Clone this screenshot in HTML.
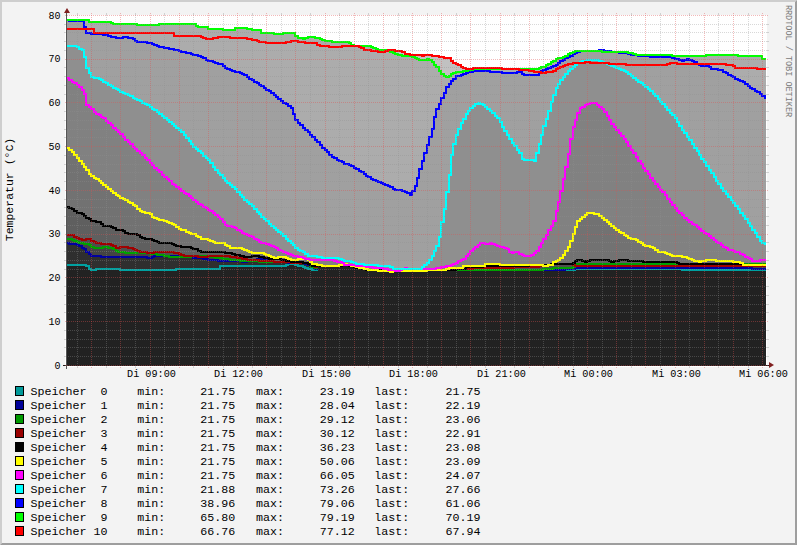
<!DOCTYPE html>
<html><head><meta charset="utf-8"><title>RRD</title>
<style>
html,body{margin:0;padding:0;background:#f3f3f3;}
body{width:797px;height:545px;overflow:hidden;}
svg{display:block;}
text{font-family:"Liberation Mono",monospace;}
</style></head><body>
<svg width="797" height="545" viewBox="0 0 797 545">
<rect x="0" y="0" width="797" height="545" fill="#f3f3f3"/>
<polygon points="0,545 2,543 2,2 795,2 797,0 0,0" fill="#cecece"/>
<polygon points="2,543 795,543 795,2 797,0 797,545 0,545" fill="#9e9e9e"/>
<rect x="65" y="15" width="702" height="352" fill="#ffffff"/>
<defs><clipPath id="pa"><rect x="67" y="15" width="699" height="350"/></clipPath></defs>
<g clip-path="url(#pa)">
<polygon points="67,365 67,29 69,29 69,29 72,29 72,29 74,29 74,29 77,29 77,29 79,29 79,29 82,29 82,29 84,29 84,29 86,29 86,29 89,29 89,29 91,29 91,29 94,29 94,33 96,33 96,33 99,33 99,33 101,33 101,33 103,33 103,33 106,33 106,33 108,33 108,33 111,33 111,33 113,33 113,33 116,33 116,33 118,33 118,33 120,33 120,33 123,33 123,33 125,33 125,33 128,33 128,33 130,33 130,33 133,33 133,33 135,33 135,33 137,33 137,33 140,33 140,33 142,33 142,33 145,33 145,33 147,33 147,33 150,33 150,33 152,33 152,33 154,33 154,33 157,33 157,33 159,33 159,33 162,33 162,33 164,33 164,33 167,33 167,33 169,33 169,33 172,33 172,33 174,33 174,36 176,36 176,36 179,36 179,36 181,36 181,36 184,36 184,36 186,36 186,36 189,36 189,36 191,36 191,36 193,36 193,36 196,36 196,36 198,36 198,36 201,36 201,37 203,37 203,38 206,38 206,39 208,39 208,39 210,39 210,39 213,39 213,38 215,38 215,38 218,38 218,37 220,37 220,37 223,37 223,37 225,37 225,37 227,37 227,37 230,37 230,38 232,38 232,38 235,38 235,38 237,38 237,38 240,38 240,38 242,38 242,38 244,38 244,38 247,38 247,39 249,39 249,39 252,39 252,40 254,40 254,40 257,40 257,41 259,41 259,42 261,42 261,42 264,42 264,42 266,42 266,43 269,43 269,43 271,43 271,43 274,43 274,43 276,43 276,43 278,43 278,43 281,43 281,43 283,43 283,43 286,43 286,42 288,42 288,42 291,42 291,41 293,41 293,41 295,41 295,41 298,41 298,42 300,42 300,42 303,42 303,42 305,42 305,43 308,43 308,43 310,43 310,43 312,43 312,43 315,43 315,43 317,43 317,45 320,45 320,46 322,46 322,46 325,46 325,46 327,46 327,46 329,46 330,47 332,47 332,47 334,47 334,47 337,47 337,47 339,47 339,47 342,47 342,46 344,46 344,46 347,46 347,46 349,46 349,46 351,46 351,46 354,46 354,46 356,46 356,46 359,46 359,47 361,47 361,48 364,48 364,50 366,50 366,50 368,50 368,50 371,50 371,51 373,51 373,51 376,51 376,51 378,51 378,52 381,52 381,52 383,52 383,52 385,52 385,51 388,51 388,50 390,50 390,50 393,50 393,50 395,50 395,51 398,51 398,51 400,51 400,51 402,51 402,52 405,52 405,54 407,54 407,54 410,54 410,55 412,55 412,55 415,55 415,55 417,55 417,55 419,55 419,55 422,55 422,56 424,56 424,55 427,55 427,55 429,55 429,55 432,55 432,56 434,56 434,56 436,56 436,56 439,56 439,57 441,57 441,57 444,57 444,58 446,58 446,58 449,58 449,58 451,58 451,61 453,61 453,63 456,63 456,64 458,64 458,65 461,65 461,67 463,67 463,68 466,68 466,69 468,69 468,69 470,69 470,69 473,69 473,68 475,68 475,68 478,68 478,68 480,68 480,68 483,68 483,68 485,68 485,68 487,68 487,68 490,68 490,68 492,68 492,68 495,68 495,68 497,68 497,68 500,68 500,68 502,68 502,69 504,69 504,69 507,69 507,69 509,69 509,69 512,69 512,69 514,69 514,69 517,69 517,69 519,69 519,70 522,70 522,70 524,70 524,70 526,70 526,70 529,70 529,71 531,71 531,71 534,71 534,72 536,72 536,72 539,72 539,72 541,72 541,73 543,73 543,73 546,73 546,72 548,72 548,72 551,72 551,72 553,72 553,71 556,71 556,69 558,69 558,68 560,68 560,67 563,67 563,66 565,66 565,65 568,65 568,64 570,64 570,64 573,64 573,63 575,63 575,63 577,63 577,63 580,63 580,63 582,63 582,63 585,63 585,62 587,62 587,62 590,62 590,63 592,63 592,63 594,63 594,63 597,63 597,63 599,63 599,63 602,63 602,63 604,63 604,63 607,63 607,63 609,63 609,64 611,64 611,64 614,64 614,64 616,64 616,64 619,64 619,64 621,64 621,64 624,64 624,64 626,64 626,65 628,65 628,65 631,65 631,65 633,65 633,65 636,65 636,65 638,65 638,65 641,65 641,65 643,65 643,65 645,65 645,65 648,65 648,65 650,65 650,65 653,65 653,65 655,65 655,65 658,65 658,65 660,65 660,65 662,65 662,65 665,65 665,65 667,65 667,64 670,64 670,63 672,63 672,63 675,63 675,63 677,63 677,64 679,64 680,64 682,64 682,64 684,64 684,64 687,64 687,64 689,64 689,64 692,64 692,64 694,64 694,64 697,64 697,64 699,64 699,64 701,64 701,64 704,64 704,64 706,64 706,64 709,64 709,64 711,64 711,64 714,64 714,64 716,64 716,64 718,64 718,64 721,64 721,64 723,64 723,64 726,64 726,65 728,65 728,65 731,65 731,65 733,65 733,66 735,66 735,68 738,68 738,68 740,68 740,68 743,68 743,68 745,68 745,68 748,68 748,68 750,68 750,68 752,68 752,68 755,68 755,68 757,68 757,69 760,69 760,69 762,69 762,69 765,69 765,69 766,69 766,365" fill="#c1c1c1"/>
<polygon points="67,365 67,20 69,20 69,20 72,20 72,20 74,20 74,20 77,20 77,20 79,20 79,20 82,20 82,20 84,20 84,20 86,20 86,20 89,20 89,22 91,22 91,22 94,22 94,22 96,22 96,22 99,22 99,22 101,22 101,22 103,22 103,22 106,22 106,22 108,22 108,22 111,22 111,23 113,23 113,24 116,24 116,24 118,24 118,24 120,24 120,24 123,24 123,24 125,24 125,24 128,24 128,24 130,24 130,24 133,24 133,24 135,24 135,24 137,24 137,25 140,25 140,25 142,25 142,25 145,25 145,25 147,25 147,25 150,25 150,25 152,25 152,25 154,25 154,25 157,25 157,25 159,25 159,24 162,24 162,24 164,24 164,24 167,24 167,24 169,24 169,24 172,24 172,24 174,24 174,24 176,24 176,24 179,24 179,24 181,24 181,24 184,24 184,24 186,24 186,24 189,24 189,24 191,24 191,24 193,24 193,24 196,24 196,26 198,26 198,27 201,27 201,27 203,27 203,27 206,27 206,27 208,27 208,29 210,29 210,29 213,29 213,29 215,29 215,29 218,29 218,29 220,29 220,29 223,29 223,30 225,30 225,30 227,30 227,30 230,30 230,30 232,30 232,30 235,30 235,28 237,28 237,28 240,28 240,28 242,28 242,28 244,28 244,28 247,28 247,29 249,29 249,29 252,29 252,30 254,30 254,30 257,30 257,30 259,30 259,30 261,30 261,33 264,33 264,33 266,33 266,33 269,33 269,33 271,33 271,33 274,33 274,34 276,34 276,34 278,34 278,34 281,34 281,34 283,34 283,33 286,33 286,33 288,33 288,33 291,33 291,33 293,33 293,33 295,33 295,36 298,36 298,38 300,38 300,38 303,38 303,39 305,39 305,38 308,38 308,37 310,37 310,37 312,37 312,37 315,37 315,38 317,38 317,38 320,38 320,39 322,39 322,40 325,40 325,41 327,41 327,41 329,41 330,41 332,41 332,42 334,42 334,42 337,42 337,42 339,42 339,42 342,42 342,42 344,42 344,42 347,42 347,42 349,42 349,43 351,43 351,45 354,45 354,46 356,46 356,46 359,46 359,46 361,46 361,46 364,46 364,46 366,46 366,46 368,46 368,46 371,46 371,47 373,47 373,48 376,48 376,49 378,49 378,50 381,50 381,50 383,50 383,50 385,50 385,50 388,50 388,50 390,50 390,52 393,52 393,53 395,53 395,54 398,54 398,55 400,55 400,55 402,55 402,56 405,56 405,56 407,56 407,56 410,56 410,56 412,56 412,57 415,57 415,58 417,58 417,59 419,59 419,60 422,60 422,60 424,60 424,60 427,60 427,59 429,59 429,60 432,60 432,62 434,62 434,65 436,65 436,67 439,67 439,71 441,71 441,74 444,74 444,76 446,76 446,77 449,77 449,76 451,76 451,74 453,74 453,73 456,73 456,72 458,72 458,72 461,72 461,72 463,72 463,71 466,71 466,71 468,71 468,70 470,70 470,70 473,70 473,69 475,69 475,69 478,69 478,69 480,69 480,69 483,69 483,69 485,69 485,69 487,69 487,69 490,69 490,69 492,69 492,69 495,69 495,69 497,69 497,69 500,69 500,69 502,69 502,69 504,69 504,69 507,69 507,69 509,69 509,69 512,69 512,69 514,69 514,69 517,69 517,69 519,69 519,69 522,69 522,69 524,69 524,69 526,69 526,69 529,69 529,69 531,69 531,69 534,69 534,69 536,69 536,69 539,69 539,68 541,68 541,67 543,67 543,67 546,67 546,65 548,65 548,64 551,64 551,62 553,62 553,61 556,61 556,59 558,59 558,58 560,58 560,58 563,58 563,57 565,57 565,56 568,56 568,54 570,54 570,53 573,53 573,52 575,52 575,51 577,51 577,51 580,51 580,51 582,51 582,51 585,51 585,51 587,51 587,51 590,51 590,51 592,51 592,51 594,51 594,51 597,51 597,51 599,51 599,51 602,51 602,52 604,52 604,52 607,52 607,52 609,52 609,52 611,52 611,52 614,52 614,52 616,52 616,52 619,52 619,52 621,52 621,52 624,52 624,52 626,52 626,52 628,52 628,53 631,53 631,53 633,53 633,54 636,54 636,55 638,55 638,55 641,55 641,55 643,55 643,55 645,55 645,55 648,55 648,55 650,55 650,55 653,55 653,55 655,55 655,55 658,55 658,55 660,55 660,55 662,55 662,55 665,55 665,55 667,55 667,55 670,55 670,55 672,55 672,56 675,56 675,56 677,56 677,56 679,56 680,56 682,56 682,56 684,56 684,56 687,56 687,56 689,56 689,56 692,56 692,56 694,56 694,56 697,56 697,56 699,56 699,56 701,56 701,56 704,56 704,56 706,56 706,55 709,55 709,55 711,55 711,55 714,55 714,55 716,55 716,55 718,55 718,55 721,55 721,55 723,55 723,55 726,55 726,55 728,55 728,55 731,55 731,55 733,55 733,55 735,55 735,55 738,55 738,56 740,56 740,56 743,56 743,56 745,56 745,56 748,56 748,56 750,56 750,56 752,56 752,56 755,56 755,56 757,56 757,56 760,56 760,56 762,56 762,59 765,59 765,59 766,59 766,365" fill="#acacac"/>
<polygon points="67,365 67,20 69,20 69,21 72,21 72,21 74,21 74,21 77,21 77,21 79,21 79,21 82,21 82,21 84,21 84,27 86,27 86,33 89,33 89,33 91,33 91,34 94,34 94,34 96,34 96,34 99,34 99,34 101,34 101,34 103,34 103,35 106,35 106,35 108,35 108,36 111,36 111,37 113,37 113,37 116,37 116,38 118,38 118,38 120,38 120,38 123,38 123,37 125,37 125,37 128,37 128,38 130,38 130,38 133,38 133,39 135,39 135,41 137,41 137,42 140,42 140,42 142,42 142,42 145,42 145,42 147,42 147,43 150,43 150,43 152,43 152,44 154,44 154,45 157,45 157,46 159,46 159,47 162,47 162,47 164,47 164,48 167,48 167,48 169,48 169,49 172,49 172,49 174,49 174,50 176,50 176,50 179,50 179,51 181,51 181,52 184,52 184,52 186,52 186,53 189,53 189,53 191,53 191,54 193,54 193,55 196,55 196,55 198,55 198,56 201,56 201,57 203,57 203,58 206,58 206,60 208,60 208,61 210,61 210,61 213,61 213,62 215,62 215,63 218,63 218,64 220,64 220,64 223,64 223,66 225,66 225,68 227,68 227,69 230,69 230,70 232,70 232,71 235,71 235,72 237,72 237,72 240,72 240,73 242,73 242,74 244,74 244,75 247,75 247,77 249,77 249,79 252,79 252,80 254,80 254,82 257,82 257,83 259,83 259,85 261,85 261,86 264,86 264,88 266,88 266,90 269,90 269,91 271,91 271,93 274,93 274,95 276,95 276,97 278,97 278,99 281,99 281,101 283,101 283,103 286,103 286,104 288,104 288,106 291,106 291,108 293,108 293,114 295,114 295,120 298,120 298,123 300,123 300,125 303,125 303,128 305,128 305,130 308,130 308,132 310,132 310,135 312,135 312,137 315,137 315,140 317,140 317,142 320,142 320,145 322,145 322,148 325,148 325,150 327,150 327,152 329,152 330,155 332,155 332,157 334,157 334,158 337,158 337,160 339,160 339,161 342,161 342,162 344,162 344,164 347,164 347,164 349,164 349,165 351,165 351,166 354,166 354,168 356,168 356,169 359,169 359,171 361,171 361,172 364,172 364,174 366,174 366,176 368,176 368,177 371,177 371,179 373,179 373,180 376,180 376,181 378,181 378,182 381,182 381,183 383,183 383,184 385,184 385,185 388,185 388,186 390,186 390,187 393,187 393,189 395,189 395,190 398,190 398,190 400,190 400,190 402,190 402,191 405,191 405,192 407,192 407,193 410,193 410,195 412,195 412,191 415,191 415,186 417,186 417,178 419,178 419,169 422,169 422,161 424,161 424,153 427,153 427,145 429,145 429,137 432,137 432,129 434,129 434,117 436,117 436,109 439,109 439,104 441,104 441,98 444,98 444,93 446,93 446,87 449,87 449,84 451,84 451,81 453,81 453,79 456,79 456,76 458,76 458,76 461,76 461,75 463,75 463,74 466,74 466,73 468,73 468,72 470,72 470,72 473,72 473,71 475,71 475,71 478,71 478,71 480,71 480,71 483,71 483,71 485,71 485,71 487,71 487,71 490,71 490,72 492,72 492,72 495,72 495,72 497,72 497,72 500,72 500,72 502,72 502,73 504,73 504,73 507,73 507,73 509,73 509,73 512,73 512,73 514,73 514,73 517,73 517,72 519,72 519,72 522,72 522,74 524,74 524,75 526,75 526,75 529,75 529,75 531,75 531,75 534,75 534,75 536,75 536,75 539,75 539,73 541,73 541,71 543,71 543,70 546,70 546,69 548,69 548,68 551,68 551,67 553,67 553,66 556,66 556,65 558,65 558,63 560,63 560,61 563,61 563,60 565,60 565,58 568,58 568,57 570,57 570,56 573,56 573,54 575,54 575,53 577,53 577,52 580,52 580,51 582,51 582,51 585,51 585,51 587,51 587,51 590,51 590,51 592,51 592,51 594,51 594,51 597,51 597,51 599,51 599,50 602,50 602,50 604,50 604,51 607,51 607,51 609,51 609,51 611,51 611,52 614,52 614,52 616,52 616,52 619,52 619,53 621,53 621,53 624,53 624,53 626,53 626,53 628,53 628,54 631,54 631,55 633,55 633,55 636,55 636,55 638,55 638,56 641,56 641,56 643,56 643,56 645,56 645,56 648,56 648,56 650,56 650,57 653,57 653,57 655,57 655,57 658,57 658,57 660,57 660,57 662,57 662,57 665,57 665,57 667,57 667,57 670,57 670,57 672,57 672,58 675,58 675,59 677,59 677,59 679,59 680,60 682,60 682,61 684,61 684,60 687,60 687,59 689,59 689,60 692,60 692,61 694,61 694,62 697,62 697,64 699,64 699,65 701,65 701,66 704,66 704,66 706,66 706,66 709,66 709,67 711,67 711,69 714,69 714,69 716,69 716,69 718,69 718,70 721,70 721,70 723,70 723,72 726,72 726,73 728,73 728,75 731,75 731,76 733,76 733,77 735,77 735,79 738,79 738,80 740,80 740,81 743,81 743,82 745,82 745,84 748,84 748,86 750,86 750,88 752,88 752,89 755,89 755,91 757,91 757,92 760,92 760,94 762,94 762,96 765,96 765,98 766,98 766,365" fill="#a0a0a0"/>
<polygon points="67,365 67,46 69,46 69,46 72,46 72,46 74,46 74,46 77,46 77,47 79,47 79,49 82,49 82,50 84,50 84,57 86,57 86,68 89,68 89,73 91,73 91,77 94,77 94,78 96,78 96,78 99,78 99,79 101,79 101,80 103,80 103,82 106,82 106,83 108,83 108,85 111,85 111,86 113,86 113,88 116,88 116,89 118,89 118,90 120,90 120,92 123,92 123,93 125,93 125,94 128,94 128,95 130,95 130,96 133,96 133,98 135,98 135,99 137,99 137,100 140,100 140,101 142,101 142,103 145,103 145,104 147,104 147,105 150,105 150,107 152,107 152,109 154,109 154,110 157,110 157,112 159,112 159,114 162,114 162,116 164,116 164,118 167,118 167,120 169,120 169,122 172,122 172,124 174,124 174,126 176,126 176,128 179,128 179,130 181,130 181,132 184,132 184,135 186,135 186,138 189,138 189,141 191,141 191,144 193,144 193,147 196,147 196,149 198,149 198,151 201,151 201,153 203,153 203,156 206,156 206,158 208,158 208,160 210,160 210,163 213,163 213,167 215,167 215,170 218,170 218,173 220,173 220,175 223,175 223,178 225,178 225,181 227,181 227,183 230,183 230,185 232,185 232,187 235,187 235,189 237,189 237,192 240,192 240,195 242,195 242,197 244,197 244,200 247,200 247,202 249,202 249,204 252,204 252,206 254,206 254,209 257,209 257,212 259,212 259,214 261,214 261,217 264,217 264,219 266,219 266,221 269,221 269,224 271,224 271,226 274,226 274,228 276,228 276,230 278,230 278,232 281,232 281,234 283,234 283,236 286,236 286,239 288,239 288,241 291,241 291,243 293,243 293,245 295,245 295,248 298,248 298,250 300,250 300,251 303,251 303,252 305,252 305,254 308,254 308,256 310,256 310,256 312,256 312,256 315,256 315,256 317,256 317,257 320,257 320,257 322,257 322,258 325,258 325,258 327,258 327,258 329,258 330,258 332,258 332,258 334,258 334,258 337,258 337,258 339,258 339,259 342,259 342,260 344,260 344,261 347,261 347,261 349,261 349,261 351,261 351,262 354,262 354,263 356,263 356,264 359,264 359,264 361,264 361,264 364,264 364,265 366,265 366,265 368,265 368,265 371,265 371,265 373,265 373,265 376,265 376,265 378,265 378,266 381,266 381,266 383,266 383,266 385,266 385,266 388,266 388,266 390,266 390,267 393,267 393,269 395,269 395,269 398,269 398,269 400,269 400,269 402,269 402,269 405,269 405,269 407,269 407,269 410,269 410,269 412,269 412,269 415,269 415,269 417,269 417,269 419,269 419,269 422,269 422,267 424,267 424,265 427,265 427,263 429,263 429,260 432,260 432,256 434,256 434,251 436,251 436,246 439,246 439,237 441,237 441,222 444,222 444,209 446,209 446,192 449,192 449,175 451,175 451,155 453,155 453,144 456,144 456,135 458,135 458,129 461,129 461,123 463,123 463,119 466,119 466,114 468,114 468,111 470,111 470,108 473,108 473,106 475,106 475,104 478,104 478,103 480,103 480,104 483,104 483,105 485,105 485,107 487,107 487,109 490,109 490,111 492,111 492,113 495,113 495,116 497,116 497,118 500,118 500,122 502,122 502,127 504,127 504,131 507,131 507,135 509,135 509,139 512,139 512,143 514,143 514,146 517,146 517,150 519,150 519,153 522,153 522,159 524,159 524,160 526,160 526,160 529,160 529,160 531,160 531,160 534,160 534,161 536,161 536,153 539,153 539,144 541,144 541,135 543,135 543,126 546,126 546,119 548,119 548,111 551,111 551,102 553,102 553,95 556,95 556,88 558,88 558,84 560,84 560,80 563,80 563,77 565,77 565,74 568,74 568,71 570,71 570,69 573,69 573,67 575,67 575,65 577,65 577,63 580,63 580,62 582,62 582,61 585,61 585,61 587,61 587,60 590,60 590,60 592,60 592,60 594,60 594,60 597,60 597,60 599,60 599,61 602,61 602,62 604,62 604,63 607,63 607,64 609,64 609,65 611,65 611,66 614,66 614,67 616,67 616,68 619,68 619,69 621,69 621,70 624,70 624,71 626,71 626,72 628,72 628,74 631,74 631,76 633,76 633,78 636,78 636,80 638,80 638,82 641,82 641,83 643,83 643,85 645,85 645,87 648,87 648,89 650,89 650,91 653,91 653,94 655,94 655,96 658,96 658,99 660,99 660,102 662,102 662,104 665,104 665,107 667,107 667,110 670,110 670,113 672,113 672,115 675,115 675,118 677,118 677,122 679,122 680,126 682,126 682,130 684,130 684,133 687,133 687,137 689,137 689,140 692,140 692,144 694,144 694,148 697,148 697,151 699,151 699,155 701,155 701,159 704,159 704,162 706,162 706,166 709,166 709,170 711,170 711,173 714,173 714,177 716,177 716,181 718,181 718,184 721,184 721,188 723,188 723,191 726,191 726,194 728,194 728,197 731,197 731,200 733,200 733,203 735,203 735,206 738,206 738,209 740,209 740,213 743,213 743,216 745,216 745,219 748,219 748,223 750,223 750,226 752,226 752,230 755,230 755,233 757,233 757,237 760,237 760,241 762,241 762,243 765,243 765,244 766,244 766,365" fill="#8f8f8f"/>
<polygon points="67,365 67,78 69,78 69,80 72,80 72,82 74,82 74,83 77,83 77,85 79,85 79,87 82,87 82,90 84,90 84,94 86,94 86,105 89,105 89,107 91,107 91,109 94,109 94,112 96,112 96,114 99,114 99,115 101,115 101,117 103,117 103,118 106,118 106,121 108,121 108,123 111,123 111,125 113,125 113,128 116,128 116,130 118,130 118,132 120,132 120,134 123,134 123,137 125,137 125,140 128,140 128,142 130,142 130,144 133,144 133,147 135,147 135,149 137,149 137,151 140,151 140,153 142,153 142,155 145,155 145,158 147,158 147,160 150,160 150,163 152,163 152,165 154,165 154,168 157,168 157,170 159,170 159,172 162,172 162,175 164,175 164,177 167,177 167,179 169,179 169,181 172,181 172,184 174,184 174,185 176,185 176,187 179,187 179,189 181,189 181,191 184,191 184,193 186,193 186,194 189,194 189,196 191,196 191,198 193,198 193,200 196,200 196,202 198,202 198,204 201,204 201,205 203,205 203,207 206,207 206,208 208,208 208,210 210,210 210,211 213,211 213,213 215,213 215,215 218,215 218,217 220,217 220,219 223,219 223,222 225,222 225,225 227,225 227,226 230,226 230,226 232,226 232,227 235,227 235,228 237,228 237,230 240,230 240,231 242,231 242,233 244,233 244,234 247,234 247,235 249,235 249,236 252,236 252,237 254,237 254,239 257,239 257,240 259,240 259,242 261,242 261,243 264,243 264,243 266,243 266,244 269,244 269,245 271,245 271,246 274,246 274,247 276,247 276,248 278,248 278,250 281,250 281,251 283,251 283,252 286,252 286,253 288,253 288,254 291,254 291,255 293,255 293,256 295,256 295,256 298,256 298,257 300,257 300,257 303,257 303,258 305,258 305,259 308,259 308,259 310,259 310,260 312,260 312,260 315,260 315,260 317,260 317,260 320,260 320,260 322,260 322,260 325,260 325,260 327,260 327,260 329,260 330,260 332,260 332,260 334,260 334,261 337,261 337,262 339,262 339,262 342,262 342,263 344,263 344,265 347,265 347,265 349,265 349,265 351,265 351,265 354,265 354,265 356,265 356,266 359,266 359,266 361,266 361,266 364,266 364,266 366,266 366,267 368,267 368,267 371,267 371,267 373,267 373,268 376,268 376,268 378,268 378,268 381,268 381,268 383,268 383,269 385,269 385,269 388,269 388,270 390,270 390,270 393,270 393,270 395,270 395,271 398,271 398,271 400,271 400,270 402,270 402,269 405,269 405,268 407,268 407,269 410,269 410,269 412,269 412,269 415,269 415,269 417,269 417,269 419,269 419,269 422,269 422,269 424,269 424,269 427,269 427,269 429,269 429,269 432,269 432,269 434,269 434,269 436,269 436,268 439,268 439,268 441,268 441,267 444,267 444,267 446,267 446,266 449,266 449,266 451,266 451,265 453,265 453,264 456,264 456,263 458,263 458,261 461,261 461,260 463,260 463,259 466,259 466,256 468,256 468,254 470,254 470,251 473,251 473,249 475,249 475,247 478,247 478,245 480,245 480,243 483,243 483,243 485,243 485,244 487,244 487,244 490,244 490,243 492,243 492,244 495,244 495,245 497,245 497,246 500,246 500,247 502,247 502,247 504,247 504,248 507,248 507,249 509,249 509,252 512,252 512,253 514,253 514,252 517,252 517,252 519,252 519,254 522,254 522,255 524,255 524,256 526,256 526,256 529,256 529,256 531,256 531,255 534,255 534,253 536,253 536,251 539,251 539,247 541,247 541,243 543,243 543,239 546,239 546,235 548,235 548,230 551,230 551,226 553,226 553,221 556,221 556,211 558,211 558,202 560,202 560,191 563,191 563,179 565,179 565,167 568,167 568,154 570,154 570,139 573,139 573,127 575,127 575,120 577,120 577,113 580,113 580,108 582,108 582,107 585,107 585,105 587,105 587,104 590,104 590,103 592,103 592,103 594,103 594,103 597,103 597,105 599,105 599,107 602,107 602,109 604,109 604,112 607,112 607,116 609,116 609,120 611,120 611,124 614,124 614,127 616,127 616,130 619,130 619,133 621,133 621,136 624,136 624,139 626,139 626,142 628,142 628,146 631,146 631,150 633,150 633,153 636,153 636,157 638,157 638,161 641,161 641,164 643,164 643,168 645,168 645,171 648,171 648,174 650,174 650,178 653,178 653,181 655,181 655,184 658,184 658,187 660,187 660,190 662,190 662,192 665,192 665,195 667,195 667,199 670,199 670,202 672,202 672,205 675,205 675,208 677,208 677,211 679,211 680,213 682,213 682,215 684,215 684,218 687,218 687,220 689,220 689,222 692,222 692,224 694,224 694,225 697,225 697,227 699,227 699,229 701,229 701,231 704,231 704,233 706,233 706,234 709,234 709,236 711,236 711,238 714,238 714,240 716,240 716,242 718,242 718,243 721,243 721,245 723,245 723,247 726,247 726,248 728,248 728,250 731,250 731,250 733,250 733,251 735,251 735,252 738,252 738,252 740,252 740,254 743,254 743,255 745,255 745,257 748,257 748,258 750,258 750,259 752,259 752,261 755,261 755,261 757,261 757,261 760,261 760,260 762,260 762,260 765,260 765,260 766,260 766,365" fill="#818181"/>
<polygon points="67,365 67,148 69,148 69,150 72,150 72,152 74,152 74,155 77,155 77,158 79,158 79,161 82,161 82,164 84,164 84,167 86,167 86,170 89,170 89,174 91,174 91,176 94,176 94,178 96,178 96,179 99,179 99,181 101,181 101,183 103,183 103,185 106,185 106,187 108,187 108,189 111,189 111,191 113,191 113,193 116,193 116,195 118,195 118,196 120,196 120,198 123,198 123,199 125,199 125,200 128,200 128,202 130,202 130,203 133,203 133,205 135,205 135,206 137,206 137,209 140,209 140,211 142,211 142,212 145,212 145,213 147,213 147,213 150,213 150,214 152,214 152,217 154,217 154,218 157,218 157,219 159,219 159,220 162,220 162,220 164,220 164,221 167,221 167,222 169,222 169,223 172,223 172,224 174,224 174,225 176,225 176,227 179,227 179,229 181,229 181,230 184,230 184,230 186,230 186,232 189,232 189,233 191,233 191,234 193,234 193,234 196,234 196,236 198,236 198,237 201,237 201,239 203,239 203,239 206,239 206,239 208,239 208,240 210,240 210,241 213,241 213,242 215,242 215,243 218,243 218,243 220,243 220,243 223,243 223,243 225,243 225,245 227,245 227,246 230,246 230,248 232,248 232,248 235,248 235,248 237,248 237,248 240,248 240,248 242,248 242,249 244,249 244,250 247,250 247,251 249,251 249,252 252,252 252,253 254,253 254,253 257,253 257,253 259,253 259,253 261,253 261,253 264,253 264,254 266,254 266,255 269,255 269,256 271,256 271,257 274,257 274,258 276,258 276,258 278,258 278,257 281,257 281,257 283,257 283,257 286,257 286,258 288,258 288,259 291,259 291,260 293,260 293,260 295,260 295,260 298,260 298,259 300,259 300,259 303,259 303,259 305,259 305,259 308,259 308,260 310,260 310,262 312,262 312,264 315,264 315,264 317,264 317,265 320,265 320,265 322,265 322,266 325,266 325,266 327,266 327,266 329,266 330,266 332,266 332,266 334,266 334,266 337,266 337,266 339,266 339,265 342,265 342,265 344,265 344,264 347,264 347,265 349,265 349,265 351,265 351,266 354,266 354,266 356,266 356,267 359,267 359,268 361,268 361,268 364,268 364,269 366,269 366,269 368,269 368,270 371,270 371,270 373,270 373,270 376,270 376,270 378,270 378,271 381,271 381,271 383,271 383,271 385,271 385,271 388,271 388,271 390,271 390,272 393,272 393,271 395,271 395,271 398,271 398,271 400,271 400,271 402,271 402,271 405,271 405,271 407,271 407,271 410,271 410,271 412,271 412,271 415,271 415,271 417,271 417,271 419,271 419,271 422,271 422,271 424,271 424,271 427,271 427,270 429,270 429,270 432,270 432,270 434,270 434,270 436,270 436,270 439,270 439,270 441,270 441,270 444,270 444,270 446,270 446,269 449,269 449,268 451,268 451,268 453,268 453,268 456,268 456,268 458,268 458,268 461,268 461,268 463,268 463,266 466,266 466,266 468,266 468,266 470,266 470,266 473,266 473,266 475,266 475,266 478,266 478,266 480,266 480,266 483,266 483,266 485,266 485,264 487,264 487,264 490,264 490,264 492,264 492,264 495,264 495,264 497,264 497,264 500,264 500,265 502,265 502,265 504,265 504,265 507,265 507,265 509,265 509,265 512,265 512,265 514,265 514,265 517,265 517,265 519,265 519,265 522,265 522,265 524,265 524,265 526,265 526,265 529,265 529,265 531,265 531,265 534,265 534,265 536,265 536,265 539,265 539,265 541,265 541,265 543,265 543,266 546,266 546,266 548,266 548,265 551,265 551,265 553,265 553,262 556,262 556,261 558,261 558,260 560,260 560,258 563,258 563,255 565,255 565,251 568,251 568,247 570,247 570,241 573,241 573,234 575,234 575,227 577,227 577,221 580,221 580,219 582,219 582,217 585,217 585,215 587,215 587,213 590,213 590,213 592,213 592,213 594,213 594,214 597,214 597,214 599,214 599,216 602,216 602,218 604,218 604,220 607,220 607,222 609,222 609,224 611,224 611,226 614,226 614,228 616,228 616,230 619,230 619,232 621,232 621,233 624,233 624,235 626,235 626,236 628,236 628,238 631,238 631,239 633,239 633,239 636,239 636,240 638,240 638,242 641,242 641,243 643,243 643,245 645,245 645,246 648,246 648,246 650,246 650,247 653,247 653,248 655,248 655,250 658,250 658,252 660,252 660,252 662,252 662,252 665,252 665,253 667,253 667,254 670,254 670,255 672,255 672,256 675,256 675,256 677,256 677,256 679,256 680,256 682,256 682,257 684,257 684,257 687,257 687,258 689,258 689,259 692,259 692,260 694,260 694,261 697,261 697,261 699,261 699,262 701,262 701,261 704,261 704,261 706,261 706,260 709,260 709,260 711,260 711,260 714,260 714,260 716,260 716,261 718,261 718,261 721,261 721,261 723,261 723,261 726,261 726,261 728,261 728,261 731,261 731,261 733,261 733,262 735,262 735,262 738,262 738,262 740,262 740,263 743,263 743,265 745,265 745,265 748,265 748,265 750,265 750,265 752,265 752,265 755,265 755,265 757,265 757,265 760,265 760,265 762,265 762,265 765,265 765,265 766,265 766,365" fill="#727272"/>
<polygon points="67,365 67,207 69,207 69,208 72,208 72,209 74,209 74,211 77,211 77,213 79,213 79,213 82,213 82,214 84,214 84,216 86,216 86,218 89,218 89,219 91,219 91,221 94,221 94,221 96,221 96,222 99,222 99,222 101,222 101,224 103,224 103,226 106,226 106,226 108,226 108,226 111,226 111,227 113,227 113,228 116,228 116,230 118,230 118,230 120,230 120,230 123,230 123,231 125,231 125,233 128,233 128,234 130,234 130,234 133,234 133,234 135,234 135,234 137,234 137,235 140,235 140,237 142,237 142,238 145,238 145,239 147,239 147,239 150,239 150,239 152,239 152,240 154,240 154,241 157,241 157,242 159,242 159,243 162,243 162,243 164,243 164,243 167,243 167,243 169,243 169,243 172,243 172,244 174,244 174,245 176,245 176,246 179,246 179,246 181,246 181,247 184,247 184,247 186,247 186,247 189,247 189,247 191,247 191,248 193,248 193,249 196,249 196,249 198,249 198,251 201,251 201,252 203,252 203,252 206,252 206,252 208,252 208,252 210,252 210,252 213,252 213,252 215,252 215,252 218,252 218,252 220,252 220,252 223,252 223,252 225,252 225,253 227,253 227,253 230,253 230,253 232,253 232,254 235,254 235,255 237,255 237,255 240,255 240,256 242,256 242,256 244,256 244,257 247,257 247,257 249,257 249,257 252,257 252,256 254,256 254,256 257,256 257,256 259,256 259,257 261,257 261,257 264,257 264,258 266,258 266,258 269,258 269,259 271,259 271,259 274,259 274,259 276,259 276,259 278,259 278,259 281,259 281,260 283,260 283,260 286,260 286,261 288,261 288,261 291,261 291,262 293,262 293,262 295,262 295,262 298,262 298,262 300,262 300,262 303,262 303,263 305,263 305,263 308,263 308,264 310,264 310,265 312,265 312,266 315,266 315,266 317,266 317,265 320,265 320,266 322,266 322,266 325,266 325,266 327,266 327,266 329,266 330,266 332,266 332,266 334,266 334,266 337,266 337,266 339,266 339,266 342,266 342,265 344,265 344,265 347,265 347,265 349,265 349,266 351,266 351,266 354,266 354,267 356,267 356,268 359,268 359,268 361,268 361,269 364,269 364,269 366,269 366,270 368,270 368,270 371,270 371,270 373,270 373,270 376,270 376,270 378,270 378,270 381,270 381,270 383,270 383,270 385,270 385,270 388,270 388,270 390,270 390,270 393,270 393,270 395,270 395,270 398,270 398,270 400,270 400,270 402,270 402,270 405,270 405,270 407,270 407,270 410,270 410,270 412,270 412,270 415,270 415,270 417,270 417,270 419,270 419,270 422,270 422,270 424,270 424,270 427,270 427,270 429,270 429,270 432,270 432,270 434,270 434,270 436,270 436,270 439,270 439,270 441,270 441,270 444,270 444,270 446,270 446,270 449,270 449,270 451,270 451,270 453,270 453,270 456,270 456,269 458,269 458,269 461,269 461,269 463,269 463,269 466,269 466,267 468,267 468,267 470,267 470,267 473,267 473,267 475,267 475,267 478,267 478,267 480,267 480,267 483,267 483,266 485,266 485,266 487,266 487,266 490,266 490,266 492,266 492,266 495,266 495,266 497,266 497,266 500,266 500,266 502,266 502,266 504,266 504,266 507,266 507,266 509,266 509,266 512,266 512,266 514,266 514,266 517,266 517,266 519,266 519,266 522,266 522,266 524,266 524,266 526,266 526,266 529,266 529,265 531,265 531,265 534,265 534,265 536,265 536,265 539,265 539,265 541,265 541,265 543,265 543,265 546,265 546,265 548,265 548,265 551,265 551,264 553,264 553,264 556,264 556,264 558,264 558,264 560,264 560,264 563,264 563,264 565,264 565,264 568,264 568,264 570,264 570,264 573,264 573,263 575,263 575,261 577,261 577,260 580,260 580,260 582,260 582,261 585,261 585,262 587,262 587,261 590,261 590,260 592,260 592,260 594,260 594,260 597,260 597,260 599,260 599,260 602,260 602,260 604,260 604,260 607,260 607,260 609,260 609,261 611,261 611,262 614,262 614,261 616,261 616,261 619,261 619,260 621,260 621,260 624,260 624,260 626,260 626,260 628,260 628,261 631,261 631,261 633,261 633,261 636,261 636,261 638,261 638,261 641,261 641,261 643,261 643,262 645,262 645,262 648,262 648,262 650,262 650,262 653,262 653,262 655,262 655,262 658,262 658,262 660,262 660,262 662,262 662,262 665,262 665,262 667,262 667,262 670,262 670,262 672,262 672,262 675,262 675,262 677,262 677,263 679,263 680,264 682,264 682,264 684,264 684,264 687,264 687,264 689,264 689,264 692,264 692,264 694,264 694,264 697,264 697,264 699,264 699,264 701,264 701,264 704,264 704,264 706,264 706,264 709,264 709,264 711,264 711,264 714,264 714,264 716,264 716,264 718,264 718,264 721,264 721,264 723,264 723,264 726,264 726,264 728,264 728,264 731,264 731,264 733,264 733,264 735,264 735,264 738,264 738,264 740,264 740,264 743,264 743,265 745,265 745,265 748,265 748,265 750,265 750,265 752,265 752,265 755,265 755,265 757,265 757,265 760,265 760,265 762,265 762,265 765,265 765,265 766,265 766,365" fill="#5f5f5f"/>
<polygon points="67,365 67,235 69,235 69,235 72,235 72,235 74,235 74,237 77,237 77,238 79,238 79,239 82,239 82,240 84,240 84,240 86,240 86,239 89,239 89,239 91,239 91,241 94,241 94,242 96,242 96,243 99,243 99,243 101,243 101,244 103,244 103,244 106,244 106,244 108,244 108,244 111,244 111,245 113,245 113,246 116,246 116,248 118,248 118,248 120,248 120,247 123,247 123,247 125,247 125,247 128,247 128,248 130,248 130,248 133,248 133,249 135,249 135,250 137,250 137,251 140,251 140,252 142,252 142,252 145,252 145,252 147,252 147,253 150,253 150,253 152,253 152,253 154,253 154,252 157,252 157,252 159,252 159,252 162,252 162,252 164,252 164,252 167,252 167,252 169,252 169,252 172,252 172,252 174,252 174,253 176,253 176,253 179,253 179,254 181,254 181,255 184,255 184,256 186,256 186,256 189,256 189,256 191,256 191,256 193,256 193,256 196,256 196,256 198,256 198,257 201,257 201,257 203,257 203,257 206,257 206,257 208,257 208,256 210,256 210,256 213,256 213,256 215,256 215,256 218,256 218,256 220,256 220,256 223,256 223,256 225,256 225,256 227,256 227,256 230,256 230,257 232,257 232,257 235,257 235,257 237,257 237,258 240,258 240,258 242,258 242,259 244,259 244,259 247,259 247,260 249,260 249,260 252,260 252,260 254,260 254,260 257,260 257,260 259,260 259,261 261,261 261,261 264,261 264,261 266,261 266,261 269,261 269,261 271,261 271,261 274,261 274,262 276,262 276,262 278,262 278,262 281,262 281,262 283,262 283,262 286,262 286,262 288,262 288,262 291,262 291,263 293,263 293,263 295,263 295,263 298,263 298,263 300,263 300,263 303,263 303,263 305,263 305,263 308,263 308,264 310,264 310,265 312,265 312,266 315,266 315,267 317,267 317,265 320,265 320,266 322,266 322,266 325,266 325,266 327,266 327,266 329,266 330,266 332,266 332,266 334,266 334,266 337,266 337,266 339,266 339,266 342,266 342,265 344,265 344,265 347,265 347,265 349,265 349,266 351,266 351,266 354,266 354,267 356,267 356,268 359,268 359,268 361,268 361,269 364,269 364,269 366,269 366,270 368,270 368,270 371,270 371,270 373,270 373,270 376,270 376,270 378,270 378,270 381,270 381,270 383,270 383,270 385,270 385,270 388,270 388,270 390,270 390,270 393,270 393,270 395,270 395,270 398,270 398,270 400,270 400,270 402,270 402,270 405,270 405,270 407,270 407,270 410,270 410,270 412,270 412,270 415,270 415,270 417,270 417,270 419,270 419,270 422,270 422,270 424,270 424,270 427,270 427,270 429,270 429,270 432,270 432,270 434,270 434,270 436,270 436,270 439,270 439,270 441,270 441,270 444,270 444,270 446,270 446,270 449,270 449,270 451,270 451,270 453,270 453,270 456,270 456,269 458,269 458,269 461,269 461,269 463,269 463,269 466,269 466,269 468,269 468,269 470,269 470,269 473,269 473,268 475,268 475,268 478,268 478,268 480,268 480,268 483,268 483,268 485,268 485,268 487,268 487,268 490,268 490,268 492,268 492,268 495,268 495,268 497,268 497,268 500,268 500,268 502,268 502,268 504,268 504,268 507,268 507,268 509,268 509,268 512,268 512,268 514,268 514,267 517,267 517,267 519,267 519,267 522,267 522,267 524,267 524,267 526,267 526,267 529,267 529,267 531,267 531,267 534,267 534,267 536,267 536,267 539,267 539,266 541,266 541,266 543,266 543,266 546,266 546,265 548,265 548,265 551,265 551,265 553,265 553,264 556,264 556,264 558,264 558,264 560,264 560,264 563,264 563,264 565,264 565,264 568,264 568,264 570,264 570,264 573,264 573,265 575,265 575,266 577,266 577,266 580,266 580,266 582,266 582,266 585,266 585,266 587,266 587,266 590,266 590,266 592,266 592,266 594,266 594,266 597,266 597,266 599,266 599,266 602,266 602,266 604,266 604,266 607,266 607,266 609,266 609,266 611,266 611,266 614,266 614,266 616,266 616,266 619,266 619,266 621,266 621,266 624,266 624,266 626,266 626,266 628,266 628,266 631,266 631,266 633,266 633,266 636,266 636,266 638,266 638,266 641,266 641,266 643,266 643,266 645,266 645,266 648,266 648,266 650,266 650,266 653,266 653,266 655,266 655,266 658,266 658,266 660,266 660,266 662,266 662,266 665,266 665,266 667,266 667,266 670,266 670,266 672,266 672,266 675,266 675,266 677,266 677,266 679,266 680,266 682,266 682,266 684,266 684,266 687,266 687,266 689,266 689,266 692,266 692,266 694,266 694,266 697,266 697,266 699,266 699,266 701,266 701,266 704,266 704,266 706,266 706,266 709,266 709,266 711,266 711,266 714,266 714,266 716,266 716,266 718,266 718,266 721,266 721,266 723,266 723,266 726,266 726,266 728,266 728,266 731,266 731,266 733,266 733,266 735,266 735,266 738,266 738,266 740,266 740,266 743,266 743,266 745,266 745,266 748,266 748,266 750,266 750,266 752,266 752,266 755,266 755,266 757,266 757,266 760,266 760,266 762,266 762,266 765,266 765,266 766,266 766,365" fill="#4e4e4e"/>
<polygon points="67,365 67,239 69,239 69,239 72,239 72,240 74,240 74,241 77,241 77,242 79,242 79,243 82,243 82,243 84,243 84,244 86,244 86,244 89,244 89,245 91,245 91,247 94,247 94,248 96,248 96,248 99,248 99,248 101,248 101,248 103,248 103,247 106,247 106,247 108,247 108,248 111,248 111,248 113,248 113,249 116,249 116,251 118,251 118,252 120,252 120,252 123,252 123,252 125,252 125,253 128,253 128,253 130,253 130,253 133,253 133,253 135,253 135,253 137,253 137,251 140,251 140,253 142,253 142,253 145,253 145,253 147,253 147,253 150,253 150,254 152,254 152,254 154,254 154,254 157,254 157,255 159,255 159,255 162,255 162,255 164,255 164,256 167,256 167,256 169,256 169,257 172,257 172,257 174,257 174,257 176,257 176,257 179,257 179,257 181,257 181,257 184,257 184,257 186,257 186,257 189,257 189,257 191,257 191,256 193,256 193,256 196,256 196,256 198,256 198,256 201,256 201,256 203,256 203,256 206,256 206,257 208,257 208,257 210,257 210,257 213,257 213,257 215,257 215,258 218,258 218,258 220,258 220,258 223,258 223,259 225,259 225,259 227,259 227,259 230,259 230,260 232,260 232,260 235,260 235,260 237,260 237,260 240,260 240,261 242,261 242,261 244,261 244,261 247,261 247,261 249,261 249,261 252,261 252,261 254,261 254,261 257,261 257,261 259,261 259,262 261,262 261,262 264,262 264,262 266,262 266,262 269,262 269,262 271,262 271,262 274,262 274,262 276,262 276,262 278,262 278,262 281,262 281,262 283,262 283,262 286,262 286,262 288,262 288,262 291,262 291,263 293,263 293,263 295,263 295,263 298,263 298,263 300,263 300,263 303,263 303,263 305,263 305,263 308,263 308,264 310,264 310,266 312,266 312,267 315,267 315,268 317,268 317,265 320,265 320,266 322,266 322,266 325,266 325,266 327,266 327,266 329,266 330,266 332,266 332,266 334,266 334,266 337,266 337,266 339,266 339,266 342,266 342,265 344,265 344,265 347,265 347,265 349,265 349,266 351,266 351,266 354,266 354,267 356,267 356,268 359,268 359,268 361,268 361,269 364,269 364,269 366,269 366,270 368,270 368,270 371,270 371,270 373,270 373,270 376,270 376,270 378,270 378,270 381,270 381,270 383,270 383,270 385,270 385,270 388,270 388,270 390,270 390,270 393,270 393,270 395,270 395,270 398,270 398,270 400,270 400,270 402,270 402,270 405,270 405,270 407,270 407,270 410,270 410,270 412,270 412,270 415,270 415,270 417,270 417,270 419,270 419,270 422,270 422,270 424,270 424,270 427,270 427,270 429,270 429,270 432,270 432,270 434,270 434,270 436,270 436,270 439,270 439,270 441,270 441,270 444,270 444,270 446,270 446,270 449,270 449,270 451,270 451,270 453,270 453,270 456,270 456,270 458,270 458,270 461,270 461,270 463,270 463,270 466,270 466,270 468,270 468,270 470,270 470,270 473,270 473,270 475,270 475,270 478,270 478,270 480,270 480,270 483,270 483,270 485,270 485,270 487,270 487,270 490,270 490,270 492,270 492,270 495,270 495,270 497,270 497,270 500,270 500,270 502,270 502,270 504,270 504,270 507,270 507,270 509,270 509,270 512,270 512,270 514,270 514,270 517,270 517,270 519,270 519,270 522,270 522,270 524,270 524,270 526,270 526,270 529,270 529,270 531,270 531,270 534,270 534,270 536,270 536,270 539,270 539,270 541,270 541,270 543,270 543,269 546,269 546,269 548,269 548,269 551,269 551,269 553,269 553,268 556,268 556,268 558,268 558,268 560,268 560,268 563,268 563,268 565,268 565,268 568,268 568,268 570,268 570,268 573,268 573,267 575,267 575,264 577,264 577,264 580,264 580,264 582,264 582,264 585,264 585,264 587,264 587,264 590,264 590,264 592,264 592,264 594,264 594,264 597,264 597,264 599,264 599,264 602,264 602,264 604,264 604,264 607,264 607,264 609,264 609,264 611,264 611,264 614,264 614,264 616,264 616,264 619,264 619,264 621,264 621,264 624,264 624,264 626,264 626,264 628,264 628,264 631,264 631,264 633,264 633,264 636,264 636,264 638,264 638,264 641,264 641,264 643,264 643,264 645,264 645,264 648,264 648,264 650,264 650,264 653,264 653,264 655,264 655,264 658,264 658,264 660,264 660,264 662,264 662,264 665,264 665,264 667,264 667,264 670,264 670,264 672,264 672,264 675,264 675,264 677,264 677,264 679,264 680,264 682,264 682,264 684,264 684,264 687,264 687,264 689,264 689,264 692,264 692,264 694,264 694,264 697,264 697,264 699,264 699,264 701,264 701,264 704,264 704,264 706,264 706,264 709,264 709,264 711,264 711,264 714,264 714,264 716,264 716,264 718,264 718,264 721,264 721,264 723,264 723,264 726,264 726,264 728,264 728,264 731,264 731,264 733,264 733,264 735,264 735,264 738,264 738,264 740,264 740,264 743,264 743,264 745,264 745,264 748,264 748,264 750,264 750,264 752,264 752,264 755,264 755,264 757,264 757,264 760,264 760,264 762,264 762,264 765,264 765,264 766,264 766,365" fill="#444444"/>
<polygon points="67,365 67,243 69,243 69,244 72,244 72,244 74,244 74,244 77,244 77,245 79,245 79,246 82,246 82,248 84,248 84,249 86,249 86,252 89,252 89,254 91,254 91,256 94,256 94,256 96,256 96,256 99,256 99,256 101,256 101,257 103,257 103,257 106,257 106,257 108,257 108,257 111,257 111,257 113,257 113,257 116,257 116,257 118,257 118,257 120,257 120,257 123,257 123,257 125,257 125,257 128,257 128,257 130,257 130,257 133,257 133,257 135,257 135,257 137,257 137,257 140,257 140,257 142,257 142,257 145,257 145,257 147,257 147,258 150,258 150,258 152,258 152,257 154,257 154,256 157,256 157,256 159,256 159,256 162,256 162,256 164,256 164,256 167,256 167,256 169,256 169,256 172,256 172,256 174,256 174,256 176,256 176,256 179,256 179,256 181,256 181,256 184,256 184,256 186,256 186,257 189,257 189,257 191,257 191,257 193,257 193,258 196,258 196,258 198,258 198,258 201,258 201,258 203,258 203,259 206,259 206,259 208,259 208,260 210,260 210,260 213,260 213,260 215,260 215,260 218,260 218,261 220,261 220,261 223,261 223,261 225,261 225,261 227,261 227,261 230,261 230,261 232,261 232,261 235,261 235,261 237,261 237,261 240,261 240,261 242,261 242,262 244,262 244,262 247,262 247,261 249,261 249,261 252,261 252,260 254,260 254,260 257,260 257,259 259,259 259,259 261,259 261,259 264,259 264,259 266,259 266,260 269,260 269,261 271,261 271,262 274,262 274,262 276,262 276,262 278,262 278,262 281,262 281,262 283,262 283,262 286,262 286,262 288,262 288,263 291,263 291,263 293,263 293,263 295,263 295,263 298,263 298,263 300,263 300,263 303,263 303,263 305,263 305,264 308,264 308,265 310,265 310,266 312,266 312,267 315,267 315,269 317,269 317,265 320,265 320,266 322,266 322,266 325,266 325,266 327,266 327,266 329,266 330,266 332,266 332,266 334,266 334,266 337,266 337,266 339,266 339,266 342,266 342,265 344,265 344,265 347,265 347,265 349,265 349,266 351,266 351,266 354,266 354,267 356,267 356,268 359,268 359,268 361,268 361,269 364,269 364,269 366,269 366,270 368,270 368,270 371,270 371,270 373,270 373,270 376,270 376,270 378,270 378,270 381,270 381,270 383,270 383,270 385,270 385,270 388,270 388,270 390,270 390,270 393,270 393,270 395,270 395,270 398,270 398,270 400,270 400,270 402,270 402,270 405,270 405,270 407,270 407,270 410,270 410,270 412,270 412,270 415,270 415,270 417,270 417,270 419,270 419,270 422,270 422,270 424,270 424,270 427,270 427,270 429,270 429,270 432,270 432,270 434,270 434,270 436,270 436,270 439,270 439,270 441,270 441,270 444,270 444,270 446,270 446,270 449,270 449,270 451,270 451,270 453,270 453,270 456,270 456,270 458,270 458,270 461,270 461,270 463,270 463,270 466,270 466,270 468,270 468,270 470,270 470,270 473,270 473,270 475,270 475,270 478,270 478,270 480,270 480,270 483,270 483,270 485,270 485,270 487,270 487,270 490,270 490,270 492,270 492,270 495,270 495,270 497,270 497,270 500,270 500,270 502,270 502,270 504,270 504,270 507,270 507,270 509,270 509,270 512,270 512,270 514,270 514,270 517,270 517,270 519,270 519,270 522,270 522,270 524,270 524,270 526,270 526,270 529,270 529,270 531,270 531,270 534,270 534,270 536,270 536,270 539,270 539,270 541,270 541,270 543,270 543,270 546,270 546,270 548,270 548,270 551,270 551,270 553,270 553,270 556,270 556,270 558,270 558,270 560,270 560,270 563,270 563,270 565,270 565,269 568,269 568,269 570,269 570,269 573,269 573,269 575,269 575,268 577,268 577,268 580,268 580,268 582,268 582,268 585,268 585,268 587,268 587,268 590,268 590,268 592,268 592,268 594,268 594,268 597,268 597,268 599,268 599,268 602,268 602,268 604,268 604,268 607,268 607,268 609,268 609,268 611,268 611,268 614,268 614,268 616,268 616,268 619,268 619,268 621,268 621,268 624,268 624,268 626,268 626,268 628,268 628,268 631,268 631,268 633,268 633,268 636,268 636,268 638,268 638,268 641,268 641,268 643,268 643,268 645,268 645,268 648,268 648,268 650,268 650,268 653,268 653,268 655,268 655,268 658,268 658,268 660,268 660,268 662,268 662,268 665,268 665,268 667,268 667,268 670,268 670,268 672,268 672,268 675,268 675,268 677,268 677,268 679,268 680,268 682,268 682,268 684,268 684,268 687,268 687,268 689,268 689,268 692,268 692,268 694,268 694,268 697,268 697,268 699,268 699,268 701,268 701,268 704,268 704,268 706,268 706,268 709,268 709,268 711,268 711,268 714,268 714,268 716,268 716,268 718,268 718,268 721,268 721,268 723,268 723,268 726,268 726,268 728,268 728,268 731,268 731,268 733,268 733,268 735,268 735,268 738,268 738,268 740,268 740,268 743,268 743,268 745,268 745,268 748,268 748,268 750,268 750,268 752,268 752,269 755,269 755,269 757,269 757,269 760,269 760,269 762,269 762,269 765,269 765,269 766,269 766,365" fill="#2f2f2f"/>
<polygon points="67,365 67,265 69,265 69,265 72,265 72,265 74,265 74,265 77,265 77,265 79,265 79,265 82,265 82,265 84,265 84,265 86,265 86,266 89,266 89,269 91,269 91,270 94,270 94,270 96,270 96,269 99,269 99,269 101,269 101,269 103,269 103,269 106,269 106,269 108,269 108,269 111,269 111,269 113,269 113,269 116,269 116,269 118,269 118,269 120,269 120,270 123,270 123,270 125,270 125,270 128,270 128,270 130,270 130,270 133,270 133,270 135,270 135,270 137,270 137,270 140,270 140,270 142,270 142,270 145,270 145,270 147,270 147,270 150,270 150,270 152,270 152,270 154,270 154,270 157,270 157,270 159,270 159,270 162,270 162,270 164,270 164,270 167,270 167,270 169,270 169,270 172,270 172,270 174,270 174,270 176,270 176,269 179,269 179,269 181,269 181,269 184,269 184,269 186,269 186,269 189,269 189,269 191,269 191,269 193,269 193,269 196,269 196,269 198,269 198,269 201,269 201,269 203,269 203,269 206,269 206,269 208,269 208,269 210,269 210,269 213,269 213,269 215,269 215,269 218,269 218,269 220,269 220,266 223,266 223,266 225,266 225,266 227,266 227,266 230,266 230,266 232,266 232,266 235,266 235,266 237,266 237,266 240,266 240,266 242,266 242,266 244,266 244,266 247,266 247,266 249,266 249,266 252,266 252,266 254,266 254,266 257,266 257,266 259,266 259,266 261,266 261,266 264,266 264,266 266,266 266,266 269,266 269,266 271,266 271,266 274,266 274,266 276,266 276,266 278,266 278,266 281,266 281,266 283,266 283,266 286,266 286,265 288,265 288,264 291,264 291,264 293,264 293,264 295,264 295,265 298,265 298,266 300,266 300,266 303,266 303,267 305,267 305,268 308,268 308,269 310,269 310,269 312,269 312,270 315,270 315,270 317,270 317,265 320,265 320,266 322,266 322,266 325,266 325,266 327,266 327,266 329,266 330,266 332,266 332,266 334,266 334,266 337,266 337,266 339,266 339,266 342,266 342,265 344,265 344,265 347,265 347,265 349,265 349,266 351,266 351,266 354,266 354,267 356,267 356,268 359,268 359,268 361,268 361,269 364,269 364,269 366,269 366,270 368,270 368,270 371,270 371,270 373,270 373,270 376,270 376,270 378,270 378,270 381,270 381,270 383,270 383,270 385,270 385,270 388,270 388,270 390,270 390,270 393,270 393,270 395,270 395,270 398,270 398,270 400,270 400,270 402,270 402,270 405,270 405,270 407,270 407,270 410,270 410,270 412,270 412,270 415,270 415,270 417,270 417,270 419,270 419,270 422,270 422,270 424,270 424,270 427,270 427,270 429,270 429,270 432,270 432,270 434,270 434,270 436,270 436,270 439,270 439,270 441,270 441,270 444,270 444,270 446,270 446,270 449,270 449,270 451,270 451,270 453,270 453,270 456,270 456,270 458,270 458,270 461,270 461,270 463,270 463,270 466,270 466,270 468,270 468,270 470,270 470,270 473,270 473,270 475,270 475,270 478,270 478,270 480,270 480,270 483,270 483,270 485,270 485,270 487,270 487,270 490,270 490,270 492,270 492,270 495,270 495,270 497,270 497,270 500,270 500,270 502,270 502,270 504,270 504,270 507,270 507,270 509,270 509,270 512,270 512,270 514,270 514,270 517,270 517,270 519,270 519,270 522,270 522,270 524,270 524,270 526,270 526,270 529,270 529,270 531,270 531,270 534,270 534,270 536,270 536,270 539,270 539,270 541,270 541,270 543,270 543,270 546,270 546,270 548,270 548,270 551,270 551,270 553,270 553,270 556,270 556,270 558,270 558,270 560,270 560,270 563,270 563,270 565,270 565,270 568,270 568,270 570,270 570,270 573,270 573,270 575,270 575,269 577,269 577,269 580,269 580,269 582,269 582,269 585,269 585,269 587,269 587,269 590,269 590,269 592,269 592,269 594,269 594,269 597,269 597,269 599,269 599,269 602,269 602,269 604,269 604,269 607,269 607,269 609,269 609,269 611,269 611,269 614,269 614,269 616,269 616,269 619,269 619,269 621,269 621,269 624,269 624,269 626,269 626,269 628,269 628,269 631,269 631,269 633,269 633,269 636,269 636,269 638,269 638,269 641,269 641,269 643,269 643,269 645,269 645,269 648,269 648,269 650,269 650,269 653,269 653,269 655,269 655,269 658,269 658,269 660,269 660,269 662,269 662,269 665,269 665,269 667,269 667,269 670,269 670,269 672,269 672,269 675,269 675,269 677,269 677,269 679,269 680,269 682,269 682,270 684,270 684,270 687,270 687,270 689,270 689,270 692,270 692,270 694,270 694,270 697,270 697,270 699,270 699,270 701,270 701,270 704,270 704,270 706,270 706,270 709,270 709,270 711,270 711,270 714,270 714,270 716,270 716,270 718,270 718,270 721,270 721,270 723,270 723,270 726,270 726,270 728,270 728,270 731,270 731,270 733,270 733,270 735,270 735,270 738,270 738,270 740,270 740,270 743,270 743,270 745,270 745,270 748,270 748,270 750,270 750,270 752,270 752,270 755,270 755,270 757,270 757,270 760,270 760,270 762,270 762,270 765,270 765,270 766,270 766,365" fill="#222222"/>
</g>
<path d="M67 265H69H72H74H77H79H82H84H86V266H89V269H91V270H94H96V269H99H101H103H106H108H111H113H116H118H120V270H123H125H128H130H133H135H137H140H142H145H147H150H152H154H157H159H162H164H167H169H172H174H176V269H179H181H184H186H189H191H193H196H198H201H203H206H208H210H213H215H218H220V266H223H225H227H230H232H235H237H240H242H244H247H249H252H254H257H259H261H264H266H269H271H274H276H278H281H283H286V265H288V264H291H293H295V265H298V266H300H303V267H305V268H308V269H310H312V270H315H317V265H320V266H322H325H327H329H332H334H337H339H342V265H344H347H349V266H351H354V267H356V268H359H361V269H364H366V270H368H371H373H376H378H381H383H385H388H390H393H395H398H400H402H405H407H410H412H415H417H419H422H424H427H429H432H434H436H439H441H444H446H449H451H453H456H458H461H463H466H468H470H473H475H478H480H483H485H487H490H492H495H497H500H502H504H507H509H512H514H517H519H522H524H526H529H531H534H536H539H541H543H546H548H551H553H556H558H560H563H565H568H570H573H575V269H577H580H582H585H587H590H592H594H597H599H602H604H607H609H611H614H616H619H621H624H626H628H631H633H636H638H641H643H645H648H650H653H655H658H660H662H665H667H670H672H675H677H679H682V270H684H687H689H692H694H697H699H701H704H706H709H711H714H716H718H721H723H726H728H731H733H735H738H740H743H745H748H750H752H755H757H760H762H765H766" fill="none" stroke="#00a0a0" stroke-width="2" stroke-linejoin="miter" stroke-linecap="butt" shape-rendering="crispEdges"/>
<path d="M67 243H69V244H72H74H77V245H79V246H82V248H84V249H86V252H89V254H91V256H94H96H99H101V257H103H106H108H111H113H116H118H120H123H125H128H130H133H135H137H140H142H145H147V258H150H152V257H154V256H157H159H162H164H167H169H172H174H176H179H181H184H186V257H189H191H193V258H196H198H201H203V259H206H208V260H210H213H215H218V261H220H223H225H227H230H232H235H237H240H242V262H244H247V261H249H252V260H254H257V259H259H261H264H266V260H269V261H271V262H274H276H278H281H283H286H288V263H291H293H295H298H300H303H305V264H308V265H310V266H312V267H315V269H317V265H320V266H322H325H327H329H332H334H337H339H342V265H344H347H349V266H351H354V267H356V268H359H361V269H364H366V270H368H371H373H376H378H381H383H385H388H390H393H395H398H400H402H405H407H410H412H415H417H419H422H424H427H429H432H434H436H439H441H444H446H449H451H453H456H458H461H463H466H468H470H473H475H478H480H483H485H487H490H492H495H497H500H502H504H507H509H512H514H517H519H522H524H526H529H531H534H536H539H541H543H546H548H551H553H556H558H560H563H565V269H568H570H573H575V268H577H580H582H585H587H590H592H594H597H599H602H604H607H609H611H614H616H619H621H624H626H628H631H633H636H638H641H643H645H648H650H653H655H658H660H662H665H667H670H672H675H677H679H682H684H687H689H692H694H697H699H701H704H706H709H711H714H716H718H721H723H726H728H731H733H735H738H740H743H745H748H750H752V269H755H757H760H762H765H766" fill="none" stroke="#0000a0" stroke-width="2" stroke-linejoin="miter" stroke-linecap="butt" shape-rendering="crispEdges"/>
<path d="M67 239H69H72V240H74V241H77V242H79V243H82H84V244H86H89V245H91V247H94V248H96H99H101H103V247H106H108V248H111H113V249H116V251H118V252H120H123H125V253H128H130H133H135H137V251H140V253H142H145H147H150V254H152H154H157V255H159H162H164V256H167H169V257H172H174H176H179H181H184H186H189H191V256H193H196H198H201H203H206V257H208H210H213H215V258H218H220H223V259H225H227H230V260H232H235H237H240V261H242H244H247H249H252H254H257H259V262H261H264H266H269H271H274H276H278H281H283H286H288H291V263H293H295H298H300H303H305H308V264H310V266H312V267H315V268H317V265H320V266H322H325H327H329H332H334H337H339H342V265H344H347H349V266H351H354V267H356V268H359H361V269H364H366V270H368H371H373H376H378H381H383H385H388H390H393H395H398H400H402H405H407H410H412H415H417H419H422H424H427H429H432H434H436H439H441H444H446H449H451H453H456H458H461H463H466H468H470H473H475H478H480H483H485H487H490H492H495H497H500H502H504H507H509H512H514H517H519H522H524H526H529H531H534H536H539H541H543V269H546H548H551H553V268H556H558H560H563H565H568H570H573V267H575V264H577H580H582H585H587H590H592H594H597H599H602H604H607H609H611H614H616H619H621H624H626H628H631H633H636H638H641H643H645H648H650H653H655H658H660H662H665H667H670H672H675H677H679H682H684H687H689H692H694H697H699H701H704H706H709H711H714H716H718H721H723H726H728H731H733H735H738H740H743H745H748H750H752H755H757H760H762H765H766" fill="none" stroke="#00a000" stroke-width="2" stroke-linejoin="miter" stroke-linecap="butt" shape-rendering="crispEdges"/>
<path d="M67 235H69H72H74V237H77V238H79V239H82V240H84H86V239H89H91V241H94V242H96V243H99H101V244H103H106H108H111V245H113V246H116V248H118H120V247H123H125H128V248H130H133V249H135V250H137V251H140V252H142H145H147V253H150H152H154V252H157H159H162H164H167H169H172H174V253H176H179V254H181V255H184V256H186H189H191H193H196H198V257H201H203H206H208V256H210H213H215H218H220H223H225H227H230V257H232H235H237V258H240H242V259H244H247V260H249H252H254H257H259V261H261H264H266H269H271H274V262H276H278H281H283H286H288H291V263H293H295H298H300H303H305H308V264H310V265H312V266H315V267H317V265H320V266H322H325H327H329H332H334H337H339H342V265H344H347H349V266H351H354V267H356V268H359H361V269H364H366V270H368H371H373H376H378H381H383H385H388H390H393H395H398H400H402H405H407H410H412H415H417H419H422H424H427H429H432H434H436H439H441H444H446H449H451H453H456V269H458H461H463H466H468H470H473V268H475H478H480H483H485H487H490H492H495H497H500H502H504H507H509H512H514V267H517H519H522H524H526H529H531H534H536H539V266H541H543H546V265H548H551H553V264H556H558H560H563H565H568H570H573V265H575V266H577H580H582H585H587H590H592H594H597H599H602H604H607H609H611H614H616H619H621H624H626H628H631H633H636H638H641H643H645H648H650H653H655H658H660H662H665H667H670H672H675H677H679H682H684H687H689H692H694H697H699H701H704H706H709H711H714H716H718H721H723H726H728H731H733H735H738H740H743H745H748H750H752H755H757H760H762H765H766" fill="none" stroke="#a00000" stroke-width="2" stroke-linejoin="miter" stroke-linecap="butt" shape-rendering="crispEdges"/>
<path d="M67 207H69V208H72V209H74V211H77V213H79H82V214H84V216H86V218H89V219H91V221H94H96V222H99H101V224H103V226H106H108H111V227H113V228H116V230H118H120H123V231H125V233H128V234H130H133H135H137V235H140V237H142V238H145V239H147H150H152V240H154V241H157V242H159V243H162H164H167H169H172V244H174V245H176V246H179H181V247H184H186H189H191V248H193V249H196H198V251H201V252H203H206H208H210H213H215H218H220H223H225V253H227H230H232V254H235V255H237H240V256H242H244V257H247H249H252V256H254H257H259V257H261H264V258H266H269V259H271H274H276H278H281V260H283H286V261H288H291V262H293H295H298H300H303V263H305H308V264H310V265H312V266H315H317V265H320V266H322H325H327H329H332H334H337H339H342V265H344H347H349V266H351H354V267H356V268H359H361V269H364H366V270H368H371H373H376H378H381H383H385H388H390H393H395H398H400H402H405H407H410H412H415H417H419H422H424H427H429H432H434H436H439H441H444H446H449H451H453H456V269H458H461H463H466V267H468H470H473H475H478H480H483V266H485H487H490H492H495H497H500H502H504H507H509H512H514H517H519H522H524H526H529V265H531H534H536H539H541H543H546H548H551V264H553H556H558H560H563H565H568H570H573V263H575V261H577V260H580H582V261H585V262H587V261H590V260H592H594H597H599H602H604H607H609V261H611V262H614V261H616H619V260H621H624H626H628V261H631H633H636H638H641H643V262H645H648H650H653H655H658H660H662H665H667H670H672H675H677V263H679V264H682H684H687H689H692H694H697H699H701H704H706H709H711H714H716H718H721H723H726H728H731H733H735H738H740H743V265H745H748H750H752H755H757H760H762H765H766" fill="none" stroke="#000000" stroke-width="2" stroke-linejoin="miter" stroke-linecap="butt" shape-rendering="crispEdges"/>
<path d="M67 148H69V150H72V152H74V155H77V158H79V161H82V164H84V167H86V170H89V174H91V176H94V178H96V179H99V181H101V183H103V185H106V187H108V189H111V191H113V193H116V195H118V196H120V198H123V199H125V200H128V202H130V203H133V205H135V206H137V209H140V211H142V212H145V213H147H150V214H152V217H154V218H157V219H159V220H162H164V221H167V222H169V223H172V224H174V225H176V227H179V229H181V230H184H186V232H189V233H191V234H193H196V236H198V237H201V239H203H206H208V240H210V241H213V242H215V243H218H220H223H225V245H227V246H230V248H232H235H237H240H242V249H244V250H247V251H249V252H252V253H254H257H259H261H264V254H266V255H269V256H271V257H274V258H276H278V257H281H283H286V258H288V259H291V260H293H295H298V259H300H303H305H308V260H310V262H312V264H315H317V265H320H322V266H325H327H329H332H334H337H339V265H342H344V264H347V265H349H351V266H354H356V267H359V268H361H364V269H366H368V270H371H373H376H378V271H381H383H385H388H390V272H393V271H395H398H400H402H405H407H410H412H415H417H419H422H424H427V270H429H432H434H436H439H441H444H446V269H449V268H451H453H456H458H461H463V266H466H468H470H473H475H478H480H483H485V264H487H490H492H495H497H500V265H502H504H507H509H512H514H517H519H522H524H526H529H531H534H536H539H541H543V266H546H548V265H551H553V262H556V261H558V260H560V258H563V255H565V251H568V247H570V241H573V234H575V227H577V221H580V219H582V217H585V215H587V213H590H592H594V214H597H599V216H602V218H604V220H607V222H609V224H611V226H614V228H616V230H619V232H621V233H624V235H626V236H628V238H631V239H633H636V240H638V242H641V243H643V245H645V246H648H650V247H653V248H655V250H658V252H660H662H665V253H667V254H670V255H672V256H675H677H679H682V257H684H687V258H689V259H692V260H694V261H697H699V262H701V261H704H706V260H709H711H714H716V261H718H721H723H726H728H731H733V262H735H738H740V263H743V265H745H748H750H752H755H757H760H762H765H766" fill="none" stroke="#ffff00" stroke-width="2" stroke-linejoin="miter" stroke-linecap="butt" shape-rendering="crispEdges"/>
<path d="M67 78H69V80H72V82H74V83H77V85H79V87H82V90H84V94H86V105H89V107H91V109H94V112H96V114H99V115H101V117H103V118H106V121H108V123H111V125H113V128H116V130H118V132H120V134H123V137H125V140H128V142H130V144H133V147H135V149H137V151H140V153H142V155H145V158H147V160H150V163H152V165H154V168H157V170H159V172H162V175H164V177H167V179H169V181H172V184H174V185H176V187H179V189H181V191H184V193H186V194H189V196H191V198H193V200H196V202H198V204H201V205H203V207H206V208H208V210H210V211H213V213H215V215H218V217H220V219H223V222H225V225H227V226H230H232V227H235V228H237V230H240V231H242V233H244V234H247V235H249V236H252V237H254V239H257V240H259V242H261V243H264H266V244H269V245H271V246H274V247H276V248H278V250H281V251H283V252H286V253H288V254H291V255H293V256H295H298V257H300H303V258H305V259H308H310V260H312H315H317H320H322H325H327H329H332H334V261H337V262H339H342V263H344V265H347H349H351H354H356V266H359H361H364H366V267H368H371H373V268H376H378H381H383V269H385H388V270H390H393H395V271H398H400V270H402V269H405V268H407V269H410H412H415H417H419H422H424H427H429H432H434H436V268H439H441V267H444H446V266H449H451V265H453V264H456V263H458V261H461V260H463V259H466V256H468V254H470V251H473V249H475V247H478V245H480V243H483H485V244H487H490V243H492V244H495V245H497V246H500V247H502H504V248H507V249H509V252H512V253H514V252H517H519V254H522V255H524V256H526H529H531V255H534V253H536V251H539V247H541V243H543V239H546V235H548V230H551V226H553V221H556V211H558V202H560V191H563V179H565V167H568V154H570V139H573V127H575V120H577V113H580V108H582V107H585V105H587V104H590V103H592H594H597V105H599V107H602V109H604V112H607V116H609V120H611V124H614V127H616V130H619V133H621V136H624V139H626V142H628V146H631V150H633V153H636V157H638V161H641V164H643V168H645V171H648V174H650V178H653V181H655V184H658V187H660V190H662V192H665V195H667V199H670V202H672V205H675V208H677V211H679V213H682V215H684V218H687V220H689V222H692V224H694V225H697V227H699V229H701V231H704V233H706V234H709V236H711V238H714V240H716V242H718V243H721V245H723V247H726V248H728V250H731H733V251H735V252H738H740V254H743V255H745V257H748V258H750V259H752V261H755H757H760V260H762H765H766" fill="none" stroke="#ff00ff" stroke-width="2" stroke-linejoin="miter" stroke-linecap="butt" shape-rendering="crispEdges"/>
<path d="M67 46H69H72H74H77V47H79V49H82V50H84V57H86V68H89V73H91V77H94V78H96H99V79H101V80H103V82H106V83H108V85H111V86H113V88H116V89H118V90H120V92H123V93H125V94H128V95H130V96H133V98H135V99H137V100H140V101H142V103H145V104H147V105H150V107H152V109H154V110H157V112H159V114H162V116H164V118H167V120H169V122H172V124H174V126H176V128H179V130H181V132H184V135H186V138H189V141H191V144H193V147H196V149H198V151H201V153H203V156H206V158H208V160H210V163H213V167H215V170H218V173H220V175H223V178H225V181H227V183H230V185H232V187H235V189H237V192H240V195H242V197H244V200H247V202H249V204H252V206H254V209H257V212H259V214H261V217H264V219H266V221H269V224H271V226H274V228H276V230H278V232H281V234H283V236H286V239H288V241H291V243H293V245H295V248H298V250H300V251H303V252H305V254H308V256H310H312H315H317V257H320H322V258H325H327H329H332H334H337H339V259H342V260H344V261H347H349H351V262H354V263H356V264H359H361H364V265H366H368H371H373H376H378V266H381H383H385H388H390V267H393V269H395H398H400H402H405H407H410H412H415H417H419H422V267H424V265H427V263H429V260H432V256H434V251H436V246H439V237H441V222H444V209H446V192H449V175H451V155H453V144H456V135H458V129H461V123H463V119H466V114H468V111H470V108H473V106H475V104H478V103H480V104H483V105H485V107H487V109H490V111H492V113H495V116H497V118H500V122H502V127H504V131H507V135H509V139H512V143H514V146H517V150H519V153H522V159H524V160H526H529H531H534V161H536V153H539V144H541V135H543V126H546V119H548V111H551V102H553V95H556V88H558V84H560V80H563V77H565V74H568V71H570V69H573V67H575V65H577V63H580V62H582V61H585H587V60H590H592H594H597H599V61H602V62H604V63H607V64H609V65H611V66H614V67H616V68H619V69H621V70H624V71H626V72H628V74H631V76H633V78H636V80H638V82H641V83H643V85H645V87H648V89H650V91H653V94H655V96H658V99H660V102H662V104H665V107H667V110H670V113H672V115H675V118H677V122H679V126H682V130H684V133H687V137H689V140H692V144H694V148H697V151H699V155H701V159H704V162H706V166H709V170H711V173H714V177H716V181H718V184H721V188H723V191H726V194H728V197H731V200H733V203H735V206H738V209H740V213H743V216H745V219H748V223H750V226H752V230H755V233H757V237H760V241H762V243H765V244H766" fill="none" stroke="#00ffff" stroke-width="2" stroke-linejoin="miter" stroke-linecap="butt" shape-rendering="crispEdges"/>
<path d="M67 20H69V21H72H74H77H79H82H84V27H86V33H89H91V34H94H96H99H101H103V35H106H108V36H111V37H113H116V38H118H120H123V37H125H128V38H130H133V39H135V41H137V42H140H142H145H147V43H150H152V44H154V45H157V46H159V47H162H164V48H167H169V49H172H174V50H176H179V51H181V52H184H186V53H189H191V54H193V55H196H198V56H201V57H203V58H206V60H208V61H210H213V62H215V63H218V64H220H223V66H225V68H227V69H230V70H232V71H235V72H237H240V73H242V74H244V75H247V77H249V79H252V80H254V82H257V83H259V85H261V86H264V88H266V90H269V91H271V93H274V95H276V97H278V99H281V101H283V103H286V104H288V106H291V108H293V114H295V120H298V123H300V125H303V128H305V130H308V132H310V135H312V137H315V140H317V142H320V145H322V148H325V150H327V152H329V155H332V157H334V158H337V160H339V161H342V162H344V164H347H349V165H351V166H354V168H356V169H359V171H361V172H364V174H366V176H368V177H371V179H373V180H376V181H378V182H381V183H383V184H385V185H388V186H390V187H393V189H395V190H398H400H402V191H405V192H407V193H410V195H412V191H415V186H417V178H419V169H422V161H424V153H427V145H429V137H432V129H434V117H436V109H439V104H441V98H444V93H446V87H449V84H451V81H453V79H456V76H458H461V75H463V74H466V73H468V72H470H473V71H475H478H480H483H485H487H490V72H492H495H497H500H502V73H504H507H509H512H514H517V72H519H522V74H524V75H526H529H531H534H536H539V73H541V71H543V70H546V69H548V68H551V67H553V66H556V65H558V63H560V61H563V60H565V58H568V57H570V56H573V54H575V53H577V52H580V51H582H585H587H590H592H594H597H599V50H602H604V51H607H609H611V52H614H616H619V53H621H624H626H628V54H631V55H633H636H638V56H641H643H645H648H650V57H653H655H658H660H662H665H667H670H672V58H675V59H677H679V60H682V61H684V60H687V59H689V60H692V61H694V62H697V64H699V65H701V66H704H706H709V67H711V69H714H716H718V70H721H723V72H726V73H728V75H731V76H733V77H735V79H738V80H740V81H743V82H745V84H748V86H750V88H752V89H755V91H757V92H760V94H762V96H765V98H766" fill="none" stroke="#0000ff" stroke-width="2" stroke-linejoin="miter" stroke-linecap="butt" shape-rendering="crispEdges"/>
<path d="M67 20H69H72H74H77H79H82H84H86H89V22H91H94H96H99H101H103H106H108H111V23H113V24H116H118H120H123H125H128H130H133H135H137V25H140H142H145H147H150H152H154H157H159V24H162H164H167H169H172H174H176H179H181H184H186H189H191H193H196V26H198V27H201H203H206H208V29H210H213H215H218H220H223V30H225H227H230H232H235V28H237H240H242H244H247V29H249H252V30H254H257H259H261V33H264H266H269H271H274V34H276H278H281H283V33H286H288H291H293H295V36H298V38H300H303V39H305V38H308V37H310H312H315V38H317H320V39H322V40H325V41H327H329H332V42H334H337H339H342H344H347H349V43H351V45H354V46H356H359H361H364H366H368H371V47H373V48H376V49H378V50H381H383H385H388H390V52H393V53H395V54H398V55H400H402V56H405H407H410H412V57H415V58H417V59H419V60H422H424H427V59H429V60H432V62H434V65H436V67H439V71H441V74H444V76H446V77H449V76H451V74H453V73H456V72H458H461H463V71H466H468V70H470H473V69H475H478H480H483H485H487H490H492H495H497H500H502H504H507H509H512H514H517H519H522H524H526H529H531H534H536H539V68H541V67H543H546V65H548V64H551V62H553V61H556V59H558V58H560H563V57H565V56H568V54H570V53H573V52H575V51H577H580H582H585H587H590H592H594H597H599H602V52H604H607H609H611H614H616H619H621H624H626H628V53H631H633V54H636V55H638H641H643H645H648H650H653H655H658H660H662H665H667H670H672V56H675H677H679H682H684H687H689H692H694H697H699H701H704H706V55H709H711H714H716H718H721H723H726H728H731H733H735H738V56H740H743H745H748H750H752H755H757H760H762V59H765H766" fill="none" stroke="#00ff00" stroke-width="2" stroke-linejoin="miter" stroke-linecap="butt" shape-rendering="crispEdges"/>
<path d="M67 29H69H72H74H77H79H82H84H86H89H91H94V33H96H99H101H103H106H108H111H113H116H118H120H123H125H128H130H133H135H137H140H142H145H147H150H152H154H157H159H162H164H167H169H172H174V36H176H179H181H184H186H189H191H193H196H198H201V37H203V38H206V39H208H210H213V38H215H218V37H220H223H225H227H230V38H232H235H237H240H242H244H247V39H249H252V40H254H257V41H259V42H261H264H266V43H269H271H274H276H278H281H283H286V42H288H291V41H293H295H298V42H300H303H305V43H308H310H312H315H317V45H320V46H322H325H327H329V47H332H334H337H339H342V46H344H347H349H351H354H356H359V47H361V48H364V50H366H368H371V51H373H376H378V52H381H383H385V51H388V50H390H393H395V51H398H400H402V52H405V54H407H410V55H412H415H417H419H422V56H424V55H427H429H432V56H434H436H439V57H441H444V58H446H449H451V61H453V63H456V64H458V65H461V67H463V68H466V69H468H470H473V68H475H478H480H483H485H487H490H492H495H497H500H502V69H504H507H509H512H514H517H519V70H522H524H526H529V71H531H534V72H536H539H541V73H543H546V72H548H551H553V71H556V69H558V68H560V67H563V66H565V65H568V64H570H573V63H575H577H580H582H585V62H587H590V63H592H594H597H599H602H604H607H609V64H611H614H616H619H621H624H626V65H628H631H633H636H638H641H643H645H648H650H653H655H658H660H662H665H667V64H670V63H672H675H677V64H679H682H684H687H689H692H694H697H699H701H704H706H709H711H714H716H718H721H723H726V65H728H731H733V66H735V68H738H740H743H745H748H750H752H755H757V69H760H762H765H766" fill="none" stroke="#ff0000" stroke-width="2" stroke-linejoin="miter" stroke-linecap="butt" shape-rendering="crispEdges"/>
<path d="M64 356.5H67M766 356.5H769" stroke="rgba(143,143,143,0.35)"/>
<line x1="68" y1="356.5" x2="766" y2="356.5" stroke="rgba(143,143,143,0.35)" stroke-dasharray="1 1"/>
<path d="M64 347.5H67M766 347.5H769" stroke="rgba(143,143,143,0.35)"/>
<line x1="68" y1="347.5" x2="766" y2="347.5" stroke="rgba(143,143,143,0.35)" stroke-dasharray="1 1"/>
<path d="M64 339.5H67M766 339.5H769" stroke="rgba(143,143,143,0.35)"/>
<line x1="68" y1="339.5" x2="766" y2="339.5" stroke="rgba(143,143,143,0.35)" stroke-dasharray="1 1"/>
<path d="M64 330.5H67M766 330.5H769" stroke="rgba(143,143,143,0.35)"/>
<line x1="68" y1="330.5" x2="766" y2="330.5" stroke="rgba(143,143,143,0.35)" stroke-dasharray="1 1"/>
<path d="M64 312.5H67M766 312.5H769" stroke="rgba(143,143,143,0.35)"/>
<line x1="68" y1="312.5" x2="766" y2="312.5" stroke="rgba(143,143,143,0.35)" stroke-dasharray="1 1"/>
<path d="M64 304.5H67M766 304.5H769" stroke="rgba(143,143,143,0.35)"/>
<line x1="68" y1="304.5" x2="766" y2="304.5" stroke="rgba(143,143,143,0.35)" stroke-dasharray="1 1"/>
<path d="M64 295.5H67M766 295.5H769" stroke="rgba(143,143,143,0.35)"/>
<line x1="68" y1="295.5" x2="766" y2="295.5" stroke="rgba(143,143,143,0.35)" stroke-dasharray="1 1"/>
<path d="M64 286.5H67M766 286.5H769" stroke="rgba(143,143,143,0.35)"/>
<line x1="68" y1="286.5" x2="766" y2="286.5" stroke="rgba(143,143,143,0.35)" stroke-dasharray="1 1"/>
<path d="M64 269.5H67M766 269.5H769" stroke="rgba(143,143,143,0.35)"/>
<line x1="68" y1="269.5" x2="766" y2="269.5" stroke="rgba(143,143,143,0.35)" stroke-dasharray="1 1"/>
<path d="M64 260.5H67M766 260.5H769" stroke="rgba(143,143,143,0.35)"/>
<line x1="68" y1="260.5" x2="766" y2="260.5" stroke="rgba(143,143,143,0.35)" stroke-dasharray="1 1"/>
<path d="M64 251.5H67M766 251.5H769" stroke="rgba(143,143,143,0.35)"/>
<line x1="68" y1="251.5" x2="766" y2="251.5" stroke="rgba(143,143,143,0.35)" stroke-dasharray="1 1"/>
<path d="M64 242.5H67M766 242.5H769" stroke="rgba(143,143,143,0.35)"/>
<line x1="68" y1="242.5" x2="766" y2="242.5" stroke="rgba(143,143,143,0.35)" stroke-dasharray="1 1"/>
<path d="M64 225.5H67M766 225.5H769" stroke="rgba(143,143,143,0.35)"/>
<line x1="68" y1="225.5" x2="766" y2="225.5" stroke="rgba(143,143,143,0.35)" stroke-dasharray="1 1"/>
<path d="M64 216.5H67M766 216.5H769" stroke="rgba(143,143,143,0.35)"/>
<line x1="68" y1="216.5" x2="766" y2="216.5" stroke="rgba(143,143,143,0.35)" stroke-dasharray="1 1"/>
<path d="M64 207.5H67M766 207.5H769" stroke="rgba(143,143,143,0.35)"/>
<line x1="68" y1="207.5" x2="766" y2="207.5" stroke="rgba(143,143,143,0.35)" stroke-dasharray="1 1"/>
<path d="M64 199.5H67M766 199.5H769" stroke="rgba(143,143,143,0.35)"/>
<line x1="68" y1="199.5" x2="766" y2="199.5" stroke="rgba(143,143,143,0.35)" stroke-dasharray="1 1"/>
<path d="M64 181.5H67M766 181.5H769" stroke="rgba(143,143,143,0.35)"/>
<line x1="68" y1="181.5" x2="766" y2="181.5" stroke="rgba(143,143,143,0.35)" stroke-dasharray="1 1"/>
<path d="M64 172.5H67M766 172.5H769" stroke="rgba(143,143,143,0.35)"/>
<line x1="68" y1="172.5" x2="766" y2="172.5" stroke="rgba(143,143,143,0.35)" stroke-dasharray="1 1"/>
<path d="M64 164.5H67M766 164.5H769" stroke="rgba(143,143,143,0.35)"/>
<line x1="68" y1="164.5" x2="766" y2="164.5" stroke="rgba(143,143,143,0.35)" stroke-dasharray="1 1"/>
<path d="M64 155.5H67M766 155.5H769" stroke="rgba(143,143,143,0.35)"/>
<line x1="68" y1="155.5" x2="766" y2="155.5" stroke="rgba(143,143,143,0.35)" stroke-dasharray="1 1"/>
<path d="M64 137.5H67M766 137.5H769" stroke="rgba(143,143,143,0.35)"/>
<line x1="68" y1="137.5" x2="766" y2="137.5" stroke="rgba(143,143,143,0.35)" stroke-dasharray="1 1"/>
<path d="M64 129.5H67M766 129.5H769" stroke="rgba(143,143,143,0.35)"/>
<line x1="68" y1="129.5" x2="766" y2="129.5" stroke="rgba(143,143,143,0.35)" stroke-dasharray="1 1"/>
<path d="M64 120.5H67M766 120.5H769" stroke="rgba(143,143,143,0.35)"/>
<line x1="68" y1="120.5" x2="766" y2="120.5" stroke="rgba(143,143,143,0.35)" stroke-dasharray="1 1"/>
<path d="M64 111.5H67M766 111.5H769" stroke="rgba(143,143,143,0.35)"/>
<line x1="68" y1="111.5" x2="766" y2="111.5" stroke="rgba(143,143,143,0.35)" stroke-dasharray="1 1"/>
<path d="M64 94.5H67M766 94.5H769" stroke="rgba(143,143,143,0.35)"/>
<line x1="68" y1="94.5" x2="766" y2="94.5" stroke="rgba(143,143,143,0.35)" stroke-dasharray="1 1"/>
<path d="M64 85.5H67M766 85.5H769" stroke="rgba(143,143,143,0.35)"/>
<line x1="68" y1="85.5" x2="766" y2="85.5" stroke="rgba(143,143,143,0.35)" stroke-dasharray="1 1"/>
<path d="M64 76.5H67M766 76.5H769" stroke="rgba(143,143,143,0.35)"/>
<line x1="68" y1="76.5" x2="766" y2="76.5" stroke="rgba(143,143,143,0.35)" stroke-dasharray="1 1"/>
<path d="M64 67.5H67M766 67.5H769" stroke="rgba(143,143,143,0.35)"/>
<line x1="68" y1="67.5" x2="766" y2="67.5" stroke="rgba(143,143,143,0.35)" stroke-dasharray="1 1"/>
<path d="M64 50.5H67M766 50.5H769" stroke="rgba(143,143,143,0.35)"/>
<line x1="68" y1="50.5" x2="766" y2="50.5" stroke="rgba(143,143,143,0.35)" stroke-dasharray="1 1"/>
<path d="M64 41.5H67M766 41.5H769" stroke="rgba(143,143,143,0.35)"/>
<line x1="68" y1="41.5" x2="766" y2="41.5" stroke="rgba(143,143,143,0.35)" stroke-dasharray="1 1"/>
<path d="M64 32.5H67M766 32.5H769" stroke="rgba(143,143,143,0.35)"/>
<line x1="68" y1="32.5" x2="766" y2="32.5" stroke="rgba(143,143,143,0.35)" stroke-dasharray="1 1"/>
<path d="M64 24.5H67M766 24.5H769" stroke="rgba(143,143,143,0.35)"/>
<line x1="68" y1="24.5" x2="766" y2="24.5" stroke="rgba(143,143,143,0.35)" stroke-dasharray="1 1"/>
<path d="M77.5 13V15M77.5 365V368" stroke="rgba(143,143,143,0.35)"/>
<line x1="77.5" y1="15" x2="77.5" y2="365" stroke="rgba(143,143,143,0.35)" stroke-dasharray="1 1"/>
<path d="M106.5 13V15M106.5 365V368" stroke="rgba(143,143,143,0.35)"/>
<line x1="106.5" y1="15" x2="106.5" y2="365" stroke="rgba(143,143,143,0.35)" stroke-dasharray="1 1"/>
<path d="M135.5 13V15M135.5 365V368" stroke="rgba(143,143,143,0.35)"/>
<line x1="135.5" y1="15" x2="135.5" y2="365" stroke="rgba(143,143,143,0.35)" stroke-dasharray="1 1"/>
<path d="M164.5 13V15M164.5 365V368" stroke="rgba(143,143,143,0.35)"/>
<line x1="164.5" y1="15" x2="164.5" y2="365" stroke="rgba(143,143,143,0.35)" stroke-dasharray="1 1"/>
<path d="M193.5 13V15M193.5 365V368" stroke="rgba(143,143,143,0.35)"/>
<line x1="193.5" y1="15" x2="193.5" y2="365" stroke="rgba(143,143,143,0.35)" stroke-dasharray="1 1"/>
<path d="M223.5 13V15M223.5 365V368" stroke="rgba(143,143,143,0.35)"/>
<line x1="223.5" y1="15" x2="223.5" y2="365" stroke="rgba(143,143,143,0.35)" stroke-dasharray="1 1"/>
<path d="M252.5 13V15M252.5 365V368" stroke="rgba(143,143,143,0.35)"/>
<line x1="252.5" y1="15" x2="252.5" y2="365" stroke="rgba(143,143,143,0.35)" stroke-dasharray="1 1"/>
<path d="M281.5 13V15M281.5 365V368" stroke="rgba(143,143,143,0.35)"/>
<line x1="281.5" y1="15" x2="281.5" y2="365" stroke="rgba(143,143,143,0.35)" stroke-dasharray="1 1"/>
<path d="M310.5 13V15M310.5 365V368" stroke="rgba(143,143,143,0.35)"/>
<line x1="310.5" y1="15" x2="310.5" y2="365" stroke="rgba(143,143,143,0.35)" stroke-dasharray="1 1"/>
<path d="M339.5 13V15M339.5 365V368" stroke="rgba(143,143,143,0.35)"/>
<line x1="339.5" y1="15" x2="339.5" y2="365" stroke="rgba(143,143,143,0.35)" stroke-dasharray="1 1"/>
<path d="M368.5 13V15M368.5 365V368" stroke="rgba(143,143,143,0.35)"/>
<line x1="368.5" y1="15" x2="368.5" y2="365" stroke="rgba(143,143,143,0.35)" stroke-dasharray="1 1"/>
<path d="M398.5 13V15M398.5 365V368" stroke="rgba(143,143,143,0.35)"/>
<line x1="398.5" y1="15" x2="398.5" y2="365" stroke="rgba(143,143,143,0.35)" stroke-dasharray="1 1"/>
<path d="M427.5 13V15M427.5 365V368" stroke="rgba(143,143,143,0.35)"/>
<line x1="427.5" y1="15" x2="427.5" y2="365" stroke="rgba(143,143,143,0.35)" stroke-dasharray="1 1"/>
<path d="M456.5 13V15M456.5 365V368" stroke="rgba(143,143,143,0.35)"/>
<line x1="456.5" y1="15" x2="456.5" y2="365" stroke="rgba(143,143,143,0.35)" stroke-dasharray="1 1"/>
<path d="M485.5 13V15M485.5 365V368" stroke="rgba(143,143,143,0.35)"/>
<line x1="485.5" y1="15" x2="485.5" y2="365" stroke="rgba(143,143,143,0.35)" stroke-dasharray="1 1"/>
<path d="M514.5 13V15M514.5 365V368" stroke="rgba(143,143,143,0.35)"/>
<line x1="514.5" y1="15" x2="514.5" y2="365" stroke="rgba(143,143,143,0.35)" stroke-dasharray="1 1"/>
<path d="M543.5 13V15M543.5 365V368" stroke="rgba(143,143,143,0.35)"/>
<line x1="543.5" y1="15" x2="543.5" y2="365" stroke="rgba(143,143,143,0.35)" stroke-dasharray="1 1"/>
<path d="M573.5 13V15M573.5 365V368" stroke="rgba(143,143,143,0.35)"/>
<line x1="573.5" y1="15" x2="573.5" y2="365" stroke="rgba(143,143,143,0.35)" stroke-dasharray="1 1"/>
<path d="M602.5 13V15M602.5 365V368" stroke="rgba(143,143,143,0.35)"/>
<line x1="602.5" y1="15" x2="602.5" y2="365" stroke="rgba(143,143,143,0.35)" stroke-dasharray="1 1"/>
<path d="M631.5 13V15M631.5 365V368" stroke="rgba(143,143,143,0.35)"/>
<line x1="631.5" y1="15" x2="631.5" y2="365" stroke="rgba(143,143,143,0.35)" stroke-dasharray="1 1"/>
<path d="M660.5 13V15M660.5 365V368" stroke="rgba(143,143,143,0.35)"/>
<line x1="660.5" y1="15" x2="660.5" y2="365" stroke="rgba(143,143,143,0.35)" stroke-dasharray="1 1"/>
<path d="M689.5 13V15M689.5 365V368" stroke="rgba(143,143,143,0.35)"/>
<line x1="689.5" y1="15" x2="689.5" y2="365" stroke="rgba(143,143,143,0.35)" stroke-dasharray="1 1"/>
<path d="M718.5 13V15M718.5 365V368" stroke="rgba(143,143,143,0.35)"/>
<line x1="718.5" y1="15" x2="718.5" y2="365" stroke="rgba(143,143,143,0.35)" stroke-dasharray="1 1"/>
<path d="M748.5 13V15M748.5 365V368" stroke="rgba(143,143,143,0.35)"/>
<line x1="748.5" y1="15" x2="748.5" y2="365" stroke="rgba(143,143,143,0.35)" stroke-dasharray="1 1"/>
<line x1="65" y1="321.5" x2="769" y2="321.5" stroke="rgba(222,79,79,0.4)" stroke-dasharray="1 1"/>
<line x1="65" y1="277.5" x2="769" y2="277.5" stroke="rgba(222,79,79,0.4)" stroke-dasharray="1 1"/>
<line x1="65" y1="234.5" x2="769" y2="234.5" stroke="rgba(222,79,79,0.4)" stroke-dasharray="1 1"/>
<line x1="65" y1="190.5" x2="769" y2="190.5" stroke="rgba(222,79,79,0.4)" stroke-dasharray="1 1"/>
<line x1="65" y1="146.5" x2="769" y2="146.5" stroke="rgba(222,79,79,0.4)" stroke-dasharray="1 1"/>
<line x1="65" y1="102.5" x2="769" y2="102.5" stroke="rgba(222,79,79,0.4)" stroke-dasharray="1 1"/>
<line x1="65" y1="59.5" x2="769" y2="59.5" stroke="rgba(222,79,79,0.4)" stroke-dasharray="1 1"/>
<line x1="65" y1="15.5" x2="769" y2="15.5" stroke="rgba(222,79,79,0.4)" stroke-dasharray="1 1"/>
<line x1="91.5" y1="13" x2="91.5" y2="369" stroke="rgba(222,79,79,0.4)" stroke-dasharray="1 1"/>
<line x1="120.5" y1="13" x2="120.5" y2="369" stroke="rgba(222,79,79,0.4)" stroke-dasharray="1 1"/>
<line x1="150.5" y1="13" x2="150.5" y2="369" stroke="rgba(222,79,79,0.4)" stroke-dasharray="1 1"/>
<line x1="179.5" y1="13" x2="179.5" y2="369" stroke="rgba(222,79,79,0.4)" stroke-dasharray="1 1"/>
<line x1="208.5" y1="13" x2="208.5" y2="369" stroke="rgba(222,79,79,0.4)" stroke-dasharray="1 1"/>
<line x1="237.5" y1="13" x2="237.5" y2="369" stroke="rgba(222,79,79,0.4)" stroke-dasharray="1 1"/>
<line x1="266.5" y1="13" x2="266.5" y2="369" stroke="rgba(222,79,79,0.4)" stroke-dasharray="1 1"/>
<line x1="295.5" y1="13" x2="295.5" y2="369" stroke="rgba(222,79,79,0.4)" stroke-dasharray="1 1"/>
<line x1="325.5" y1="13" x2="325.5" y2="369" stroke="rgba(222,79,79,0.4)" stroke-dasharray="1 1"/>
<line x1="354.5" y1="13" x2="354.5" y2="369" stroke="rgba(222,79,79,0.4)" stroke-dasharray="1 1"/>
<line x1="383.5" y1="13" x2="383.5" y2="369" stroke="rgba(222,79,79,0.4)" stroke-dasharray="1 1"/>
<line x1="412.5" y1="13" x2="412.5" y2="369" stroke="rgba(222,79,79,0.4)" stroke-dasharray="1 1"/>
<line x1="441.5" y1="13" x2="441.5" y2="369" stroke="rgba(222,79,79,0.4)" stroke-dasharray="1 1"/>
<line x1="470.5" y1="13" x2="470.5" y2="369" stroke="rgba(222,79,79,0.4)" stroke-dasharray="1 1"/>
<line x1="500.5" y1="13" x2="500.5" y2="369" stroke="rgba(222,79,79,0.4)" stroke-dasharray="1 1"/>
<line x1="529.5" y1="13" x2="529.5" y2="369" stroke="rgba(222,79,79,0.4)" stroke-dasharray="1 1"/>
<line x1="558.5" y1="13" x2="558.5" y2="369" stroke="rgba(222,79,79,0.4)" stroke-dasharray="1 1"/>
<line x1="587.5" y1="13" x2="587.5" y2="369" stroke="rgba(222,79,79,0.4)" stroke-dasharray="1 1"/>
<line x1="616.5" y1="13" x2="616.5" y2="369" stroke="rgba(222,79,79,0.4)" stroke-dasharray="1 1"/>
<line x1="645.5" y1="13" x2="645.5" y2="369" stroke="rgba(222,79,79,0.4)" stroke-dasharray="1 1"/>
<line x1="675.5" y1="13" x2="675.5" y2="369" stroke="rgba(222,79,79,0.4)" stroke-dasharray="1 1"/>
<line x1="704.5" y1="13" x2="704.5" y2="369" stroke="rgba(222,79,79,0.4)" stroke-dasharray="1 1"/>
<line x1="733.5" y1="13" x2="733.5" y2="369" stroke="rgba(222,79,79,0.4)" stroke-dasharray="1 1"/>
<line x1="762.5" y1="13" x2="762.5" y2="369" stroke="rgba(222,79,79,0.4)" stroke-dasharray="1 1"/>
<line x1="63" y1="365.5" x2="771" y2="365.5" stroke="#1f1f1f" stroke-width="1"/>
<line x1="66.5" y1="369" x2="66.5" y2="11" stroke="#555555" stroke-width="1"/>
<line x1="65" y1="365.5" x2="769" y2="365.5" stroke="rgba(222,79,79,0.4)" stroke-dasharray="1 1"/>
<polygon points="64,13 70,13 67,8" fill="#801f1f"/>
<polygon points="769,362 769,368 774,365" fill="#801f1f"/>
<text x="60.5" y="368.5" font-size="10" text-anchor="end" fill="#000">0</text>
<text x="60.5" y="324.8" font-size="10" text-anchor="end" fill="#000">10</text>
<text x="60.5" y="281" font-size="10" text-anchor="end" fill="#000">20</text>
<text x="60.5" y="237.2" font-size="10" text-anchor="end" fill="#000">30</text>
<text x="60.5" y="193.5" font-size="10" text-anchor="end" fill="#000">40</text>
<text x="60.5" y="149.8" font-size="10" text-anchor="end" fill="#000">50</text>
<text x="60.5" y="106" font-size="10" text-anchor="end" fill="#000">60</text>
<text x="60.5" y="62.2" font-size="10" text-anchor="end" fill="#000">70</text>
<text x="60.5" y="18.5" font-size="10" text-anchor="end" fill="#000">80</text>
<text x="151.5" y="377.4" font-size="10.2" text-anchor="middle" fill="#000">Di 09:00</text>
<text x="238.5" y="377.4" font-size="10.2" text-anchor="middle" fill="#000">Di 12:00</text>
<text x="326.5" y="377.4" font-size="10.2" text-anchor="middle" fill="#000">Di 15:00</text>
<text x="413.5" y="377.4" font-size="10.2" text-anchor="middle" fill="#000">Di 18:00</text>
<text x="501.5" y="377.4" font-size="10.2" text-anchor="middle" fill="#000">Di 21:00</text>
<text x="588.5" y="377.4" font-size="10.2" text-anchor="middle" fill="#000">Mi 00:00</text>
<text x="676.5" y="377.4" font-size="10.2" text-anchor="middle" fill="#000">Mi 03:00</text>
<text x="763.5" y="377.4" font-size="10.2" text-anchor="middle" fill="#000">Mi 06:00</text>
<text transform="translate(13,189.5) rotate(-90)" font-size="11.5" text-anchor="middle" fill="#000">Temperatur (°C)</text>
<text transform="translate(785.6,61) rotate(90)" font-size="8.5" text-anchor="middle" fill="#7a7a7a">RRDTOOL / TOBI OETIKER</text>
<rect x="15.5" y="386.5" width="8" height="9" fill="#009999" stroke="#000" stroke-width="1"/>
<text x="30.6" y="394.6" font-size="11.67" fill="#000">Speicher  0</text>
<text x="137.2" y="394.6" font-size="11.67" fill="#000">min:</text>
<text x="200.3" y="394.6" font-size="11.67" fill="#000">21.75</text>
<text x="256" y="394.6" font-size="11.67" fill="#000">max:</text>
<text x="319.7" y="394.6" font-size="11.67" fill="#000">23.19</text>
<text x="374.2" y="394.6" font-size="11.67" fill="#000">last:</text>
<text x="445.5" y="394.6" font-size="11.67" fill="#000">21.75</text>
<rect x="15.5" y="400.5" width="8" height="9" fill="#000099" stroke="#000" stroke-width="1"/>
<text x="30.6" y="408.6" font-size="11.67" fill="#000">Speicher  1</text>
<text x="137.2" y="408.6" font-size="11.67" fill="#000">min:</text>
<text x="200.3" y="408.6" font-size="11.67" fill="#000">21.75</text>
<text x="256" y="408.6" font-size="11.67" fill="#000">max:</text>
<text x="319.7" y="408.6" font-size="11.67" fill="#000">28.04</text>
<text x="374.2" y="408.6" font-size="11.67" fill="#000">last:</text>
<text x="445.5" y="408.6" font-size="11.67" fill="#000">22.19</text>
<rect x="15.5" y="414.5" width="8" height="9" fill="#009900" stroke="#000" stroke-width="1"/>
<text x="30.6" y="422.6" font-size="11.67" fill="#000">Speicher  2</text>
<text x="137.2" y="422.6" font-size="11.67" fill="#000">min:</text>
<text x="200.3" y="422.6" font-size="11.67" fill="#000">21.75</text>
<text x="256" y="422.6" font-size="11.67" fill="#000">max:</text>
<text x="319.7" y="422.6" font-size="11.67" fill="#000">29.12</text>
<text x="374.2" y="422.6" font-size="11.67" fill="#000">last:</text>
<text x="445.5" y="422.6" font-size="11.67" fill="#000">23.06</text>
<rect x="15.5" y="428.5" width="8" height="9" fill="#990000" stroke="#000" stroke-width="1"/>
<text x="30.6" y="436.6" font-size="11.67" fill="#000">Speicher  3</text>
<text x="137.2" y="436.6" font-size="11.67" fill="#000">min:</text>
<text x="200.3" y="436.6" font-size="11.67" fill="#000">21.75</text>
<text x="256" y="436.6" font-size="11.67" fill="#000">max:</text>
<text x="319.7" y="436.6" font-size="11.67" fill="#000">30.12</text>
<text x="374.2" y="436.6" font-size="11.67" fill="#000">last:</text>
<text x="445.5" y="436.6" font-size="11.67" fill="#000">22.91</text>
<rect x="15.5" y="442.5" width="8" height="9" fill="#000000" stroke="#000" stroke-width="1"/>
<text x="30.6" y="450.6" font-size="11.67" fill="#000">Speicher  4</text>
<text x="137.2" y="450.6" font-size="11.67" fill="#000">min:</text>
<text x="200.3" y="450.6" font-size="11.67" fill="#000">21.75</text>
<text x="256" y="450.6" font-size="11.67" fill="#000">max:</text>
<text x="319.7" y="450.6" font-size="11.67" fill="#000">36.23</text>
<text x="374.2" y="450.6" font-size="11.67" fill="#000">last:</text>
<text x="445.5" y="450.6" font-size="11.67" fill="#000">23.08</text>
<rect x="15.5" y="456.5" width="8" height="9" fill="#ffff00" stroke="#000" stroke-width="1"/>
<text x="30.6" y="464.6" font-size="11.67" fill="#000">Speicher  5</text>
<text x="137.2" y="464.6" font-size="11.67" fill="#000">min:</text>
<text x="200.3" y="464.6" font-size="11.67" fill="#000">21.75</text>
<text x="256" y="464.6" font-size="11.67" fill="#000">max:</text>
<text x="319.7" y="464.6" font-size="11.67" fill="#000">50.06</text>
<text x="374.2" y="464.6" font-size="11.67" fill="#000">last:</text>
<text x="445.5" y="464.6" font-size="11.67" fill="#000">23.09</text>
<rect x="15.5" y="470.5" width="8" height="9" fill="#ff00ff" stroke="#000" stroke-width="1"/>
<text x="30.6" y="478.6" font-size="11.67" fill="#000">Speicher  6</text>
<text x="137.2" y="478.6" font-size="11.67" fill="#000">min:</text>
<text x="200.3" y="478.6" font-size="11.67" fill="#000">21.75</text>
<text x="256" y="478.6" font-size="11.67" fill="#000">max:</text>
<text x="319.7" y="478.6" font-size="11.67" fill="#000">66.05</text>
<text x="374.2" y="478.6" font-size="11.67" fill="#000">last:</text>
<text x="445.5" y="478.6" font-size="11.67" fill="#000">24.07</text>
<rect x="15.5" y="484.5" width="8" height="9" fill="#00ffff" stroke="#000" stroke-width="1"/>
<text x="30.6" y="492.6" font-size="11.67" fill="#000">Speicher  7</text>
<text x="137.2" y="492.6" font-size="11.67" fill="#000">min:</text>
<text x="200.3" y="492.6" font-size="11.67" fill="#000">21.88</text>
<text x="256" y="492.6" font-size="11.67" fill="#000">max:</text>
<text x="319.7" y="492.6" font-size="11.67" fill="#000">73.26</text>
<text x="374.2" y="492.6" font-size="11.67" fill="#000">last:</text>
<text x="445.5" y="492.6" font-size="11.67" fill="#000">27.66</text>
<rect x="15.5" y="498.5" width="8" height="9" fill="#0000ff" stroke="#000" stroke-width="1"/>
<text x="30.6" y="506.6" font-size="11.67" fill="#000">Speicher  8</text>
<text x="137.2" y="506.6" font-size="11.67" fill="#000">min:</text>
<text x="200.3" y="506.6" font-size="11.67" fill="#000">38.96</text>
<text x="256" y="506.6" font-size="11.67" fill="#000">max:</text>
<text x="319.7" y="506.6" font-size="11.67" fill="#000">79.06</text>
<text x="374.2" y="506.6" font-size="11.67" fill="#000">last:</text>
<text x="445.5" y="506.6" font-size="11.67" fill="#000">61.06</text>
<rect x="15.5" y="512.5" width="8" height="9" fill="#00ff00" stroke="#000" stroke-width="1"/>
<text x="30.6" y="520.6" font-size="11.67" fill="#000">Speicher  9</text>
<text x="137.2" y="520.6" font-size="11.67" fill="#000">min:</text>
<text x="200.3" y="520.6" font-size="11.67" fill="#000">65.80</text>
<text x="256" y="520.6" font-size="11.67" fill="#000">max:</text>
<text x="319.7" y="520.6" font-size="11.67" fill="#000">79.19</text>
<text x="374.2" y="520.6" font-size="11.67" fill="#000">last:</text>
<text x="445.5" y="520.6" font-size="11.67" fill="#000">70.19</text>
<rect x="15.5" y="526.5" width="8" height="9" fill="#ff0000" stroke="#000" stroke-width="1"/>
<text x="30.6" y="534.6" font-size="11.67" fill="#000">Speicher 10</text>
<text x="137.2" y="534.6" font-size="11.67" fill="#000">min:</text>
<text x="200.3" y="534.6" font-size="11.67" fill="#000">66.76</text>
<text x="256" y="534.6" font-size="11.67" fill="#000">max:</text>
<text x="319.7" y="534.6" font-size="11.67" fill="#000">77.12</text>
<text x="374.2" y="534.6" font-size="11.67" fill="#000">last:</text>
<text x="445.5" y="534.6" font-size="11.67" fill="#000">67.94</text>
</svg>
</body></html>
